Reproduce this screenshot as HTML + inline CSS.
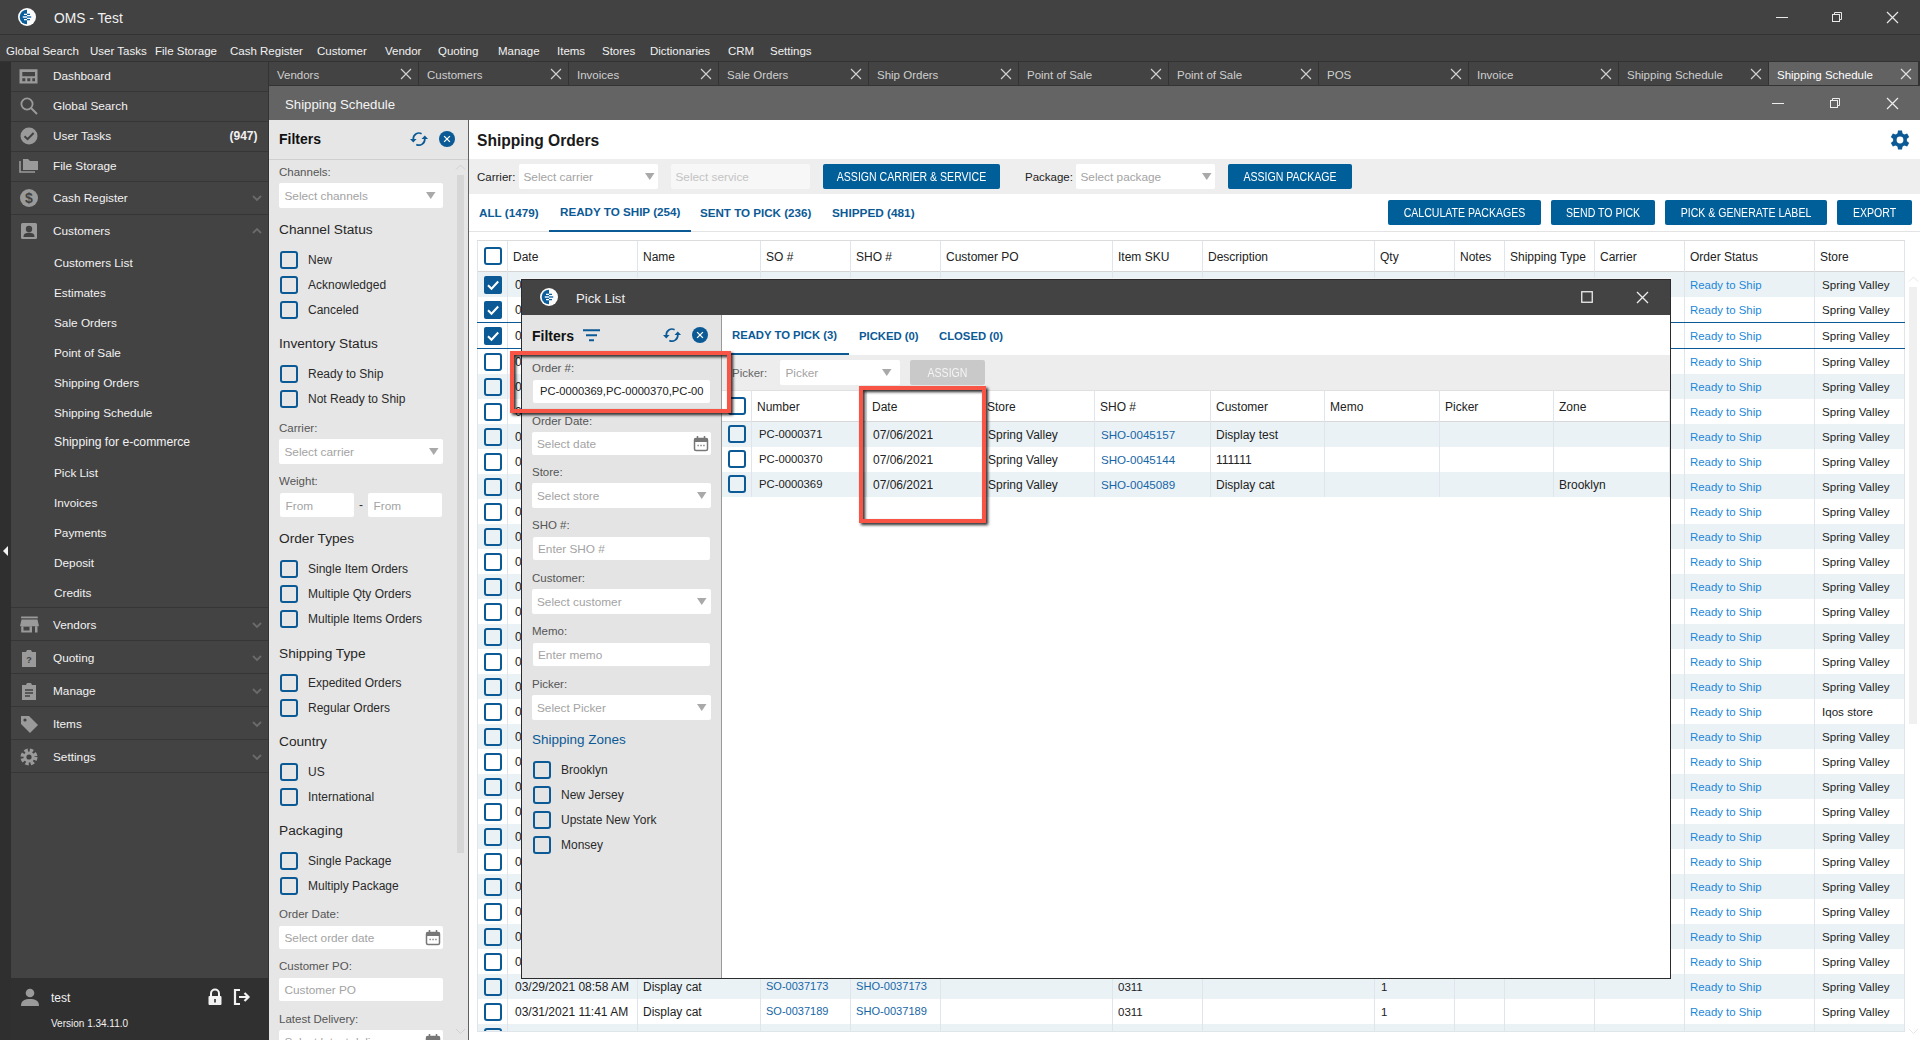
<!DOCTYPE html>
<html><head><meta charset="utf-8"><style>
html,body{margin:0;padding:0;}
body{width:1920px;height:1040px;overflow:hidden;position:relative;background:#fff;font-family:"Liberation Sans", sans-serif;}
.a{position:absolute;}
.t{position:absolute;white-space:nowrap;}
svg.a{overflow:visible;}
</style></head><body>
<div class="a" style="left:0px;top:0px;width:1920px;height:34px;background:#424242"></div><div class="a" style="left:0px;top:34px;width:1920px;height:1px;background:#333333"></div><svg class="a" style="left:16px;top:6px;" width="22" height="22" viewBox="0 0 22 22"><circle cx="11" cy="11" r="9" fill="#fbfbfb"/><path d="M11 3.7 A7.3 7.3 0 0 0 11 18.3 Z" fill="#0a5e9c"/><path d="M8 8.4H11M8 13.6H11" stroke="#ffffff" stroke-width="1.4"/><path d="M11 8.4H14M11 13.6H14" stroke="#0a5e9c" stroke-width="1.4"/><path d="M6.8 11H11" stroke="#c9dcea" stroke-width="1.8"/><path d="M11 11H15.2" stroke="#3f86bf" stroke-width="1.8"/></svg><div class="t" style="left:54px;top:8.5px;line-height:19px;font-size:13.8px;color:#f0f0f0;font-weight:normal;">OMS - Test</div><div class="a" style="left:1776px;top:17px;width:12px;height:1px;background:#e8e8e8"></div><svg class="a" style="left:1831px;top:11px;" width="12" height="12" viewBox="0 0 12 12"><rect x="1.5" y="3.5" width="7" height="7" fill="none" stroke="#e8e8e8"/><path d="M3.5 3.5V1.5H10.5V8.5H8.5" fill="none" stroke="#e8e8e8"/></svg><svg class="a" style="left:1885.5px;top:10.5px;" width="13" height="13" viewBox="0 0 13 13"><path d="M1 1L12 12M12 1L1 12" stroke="#e8e8e8" stroke-width="1.2"/></svg><div class="a" style="left:0px;top:35px;width:1920px;height:26px;background:#414141"></div><div class="t" style="left:6px;top:42.7px;line-height:16px;font-size:11.5px;color:#f2f2f2;font-weight:normal;">Global Search</div><div class="t" style="left:90px;top:42.7px;line-height:16px;font-size:11.5px;color:#f2f2f2;font-weight:normal;">User Tasks</div><div class="t" style="left:155px;top:42.7px;line-height:16px;font-size:11.5px;color:#f2f2f2;font-weight:normal;">File Storage</div><div class="t" style="left:230px;top:42.7px;line-height:16px;font-size:11.5px;color:#f2f2f2;font-weight:normal;">Cash Register</div><div class="t" style="left:317px;top:42.7px;line-height:16px;font-size:11.5px;color:#f2f2f2;font-weight:normal;">Customer</div><div class="t" style="left:385px;top:42.7px;line-height:16px;font-size:11.5px;color:#f2f2f2;font-weight:normal;">Vendor</div><div class="t" style="left:438px;top:42.7px;line-height:16px;font-size:11.5px;color:#f2f2f2;font-weight:normal;">Quoting</div><div class="t" style="left:498px;top:42.7px;line-height:16px;font-size:11.5px;color:#f2f2f2;font-weight:normal;">Manage</div><div class="t" style="left:557px;top:42.7px;line-height:16px;font-size:11.5px;color:#f2f2f2;font-weight:normal;">Items</div><div class="t" style="left:602px;top:42.7px;line-height:16px;font-size:11.5px;color:#f2f2f2;font-weight:normal;">Stores</div><div class="t" style="left:650px;top:42.7px;line-height:16px;font-size:11.5px;color:#f2f2f2;font-weight:normal;">Dictionaries</div><div class="t" style="left:728px;top:42.7px;line-height:16px;font-size:11.5px;color:#f2f2f2;font-weight:normal;">CRM</div><div class="t" style="left:770px;top:42.7px;line-height:16px;font-size:11.5px;color:#f2f2f2;font-weight:normal;">Settings</div><div class="a" style="left:0px;top:61px;width:269px;height:979px;background:#434343"></div><div class="a" style="left:0px;top:61px;width:11px;height:979px;background:#2f2f2f"></div><svg class="a" style="left:1px;top:545px;" width="8" height="12" viewBox="0 0 8 12"><path d="M7 1L2 6L7 11Z" fill="#f4f4f4"/></svg><svg class="a" style="left:19px;top:66.0px;" width="20" height="20" viewBox="0 0 20 20"><path fill="#9a9a9a" fill-rule="evenodd" d="M0.5 3.3H18.5V17.4H0.5Z M3.3 6H16V10.3H3.3Z M3.3 12.3H6.3V15.3H3.3Z M8.3 12.3H11.3V15.3H8.3Z M13.3 12.3H16V15.3H13.3Z"/></svg><div class="t" style="left:53px;top:68.0px;line-height:16px;font-size:11.8px;color:#f2f2f2;font-weight:normal;">Dashboard</div><svg class="a" style="left:19px;top:96.0px;" width="20" height="20" viewBox="0 0 20 20"><circle cx="8" cy="8" r="5.6" fill="none" stroke="#9a9a9a" stroke-width="1.8"/><path d="M12 12L18 18" stroke="#9a9a9a" stroke-width="2"/></svg><div class="t" style="left:53px;top:98.0px;line-height:16px;font-size:11.8px;color:#f2f2f2;font-weight:normal;">Global Search</div><div class="a" style="left:11px;top:91px;width:258px;height:1px;background:#363636"></div><svg class="a" style="left:19px;top:126.0px;" width="20" height="20" viewBox="0 0 20 20"><circle cx="10" cy="10" r="8.5" fill="#9a9a9a"/><path d="M5.5 10.2L8.6 13.2L14.6 7" fill="none" stroke="#414141" stroke-width="2"/></svg><div class="t" style="left:53px;top:128.0px;line-height:16px;font-size:11.8px;color:#f2f2f2;font-weight:normal;">User Tasks</div><div class="a" style="left:11px;top:121px;width:258px;height:1px;background:#363636"></div><svg class="a" style="left:19px;top:156.0px;" width="20" height="20" viewBox="0 0 20 20"><path d="M1 5V16H16" fill="none" stroke="#9a9a9a" stroke-width="1.6"/><path d="M4 3H9L11 5H19V14H4Z" fill="#9a9a9a"/></svg><div class="t" style="left:53px;top:158.0px;line-height:16px;font-size:11.8px;color:#f2f2f2;font-weight:normal;">File Storage</div><div class="a" style="left:11px;top:151px;width:258px;height:1px;background:#363636"></div><svg class="a" style="left:19px;top:187.5px;" width="20" height="20" viewBox="0 0 20 20"><circle cx="10" cy="10" r="9" fill="#9a9a9a"/><text x="10" y="15" font-size="14" font-family="Liberation Sans" font-weight="bold" text-anchor="middle" fill="#414141">$</text></svg><div class="t" style="left:53px;top:189.5px;line-height:16px;font-size:11.8px;color:#f2f2f2;font-weight:normal;">Cash Register</div><div class="a" style="left:11px;top:181px;width:258px;height:1px;background:#363636"></div><svg class="a" style="left:19px;top:220.5px;" width="20" height="20" viewBox="0 0 20 20"><rect x="2" y="2" width="16" height="16" rx="1.5" fill="#9a9a9a"/><circle cx="10" cy="8" r="3.2" fill="#414141"/><path d="M4.5 16C4.5 12.5 7 11.8 10 11.8S15.5 12.5 15.5 16Z" fill="#414141"/></svg><div class="t" style="left:53px;top:222.5px;line-height:16px;font-size:11.8px;color:#f2f2f2;font-weight:normal;">Customers</div><div class="a" style="left:11px;top:214px;width:258px;height:1px;background:#363636"></div><div class="t" style="left:229.5px;top:128.0px;line-height:16px;font-size:12px;color:#f2f2f2;font-weight:bold;">(947)</div><svg class="a" style="left:252.0px;top:195.0px;" width="10" height="6" viewBox="0 0 10 6"><path d="M1 1L5.0 5L9 1" fill="none" stroke="#6b6b6b" stroke-width="1.8"/></svg><svg class="a" style="left:252.0px;top:228.0px;" width="10" height="6" viewBox="0 0 10 6"><path d="M1 5L5.0 1L9 5" fill="none" stroke="#6b6b6b" stroke-width="1.8"/></svg><div class="t" style="left:54px;top:254.5px;line-height:16px;font-size:11.8px;color:#f2f2f2;font-weight:normal;">Customers List</div><div class="t" style="left:54px;top:284.6px;line-height:16px;font-size:11.8px;color:#f2f2f2;font-weight:normal;">Estimates</div><div class="t" style="left:54px;top:314.6px;line-height:16px;font-size:11.8px;color:#f2f2f2;font-weight:normal;">Sale Orders</div><div class="t" style="left:54px;top:344.6px;line-height:16px;font-size:11.8px;color:#f2f2f2;font-weight:normal;">Point of Sale</div><div class="t" style="left:54px;top:374.7px;line-height:16px;font-size:11.8px;color:#f2f2f2;font-weight:normal;">Shipping Orders</div><div class="t" style="left:54px;top:404.8px;line-height:16px;font-size:11.8px;color:#f2f2f2;font-weight:normal;">Shipping Schedule</div><div class="t" style="left:54px;top:434.3px;line-height:17px;font-size:12.2px;color:#f2f2f2;font-weight:normal;">Shipping for e-commerce</div><div class="t" style="left:54px;top:464.9px;line-height:16px;font-size:11.8px;color:#f2f2f2;font-weight:normal;">Pick List</div><div class="t" style="left:54px;top:494.9px;line-height:16px;font-size:11.8px;color:#f2f2f2;font-weight:normal;">Invoices</div><div class="t" style="left:54px;top:525.0px;line-height:16px;font-size:11.8px;color:#f2f2f2;font-weight:normal;">Payments</div><div class="t" style="left:54px;top:555.0px;line-height:16px;font-size:11.8px;color:#f2f2f2;font-weight:normal;">Deposit</div><div class="t" style="left:54px;top:585.0px;line-height:16px;font-size:11.8px;color:#f2f2f2;font-weight:normal;">Credits</div><div class="a" style="left:11px;top:607px;width:258px;height:1px;background:#363636"></div><svg class="a" style="left:19px;top:614.5px;" width="20" height="20" viewBox="0 0 20 20"><path fill="#9a9a9a" d="M2.1 1.5H18.8V3.3H2.1Z"/><path fill="#9a9a9a" d="M2.5 4.5H18.5L20 11.2H1Z"/><path fill="#9a9a9a" fill-rule="evenodd" d="M2.2 11.2H13V17.5H2.2Z M4.5 11.8H10.5V15.5H4.5Z"/><path fill="#9a9a9a" d="M16 11.2H18.5V17.5H16Z"/></svg><div class="t" style="left:53px;top:616.5px;line-height:16px;font-size:11.8px;color:#f2f2f2;font-weight:normal;">Vendors</div><svg class="a" style="left:252.0px;top:621.5px;" width="10" height="6" viewBox="0 0 10 6"><path d="M1 1L5.0 5L9 1" fill="none" stroke="#6b6b6b" stroke-width="1.8"/></svg><div class="a" style="left:11px;top:640px;width:258px;height:1px;background:#363636"></div><svg class="a" style="left:19px;top:647.5px;" width="20" height="20" viewBox="0 0 20 20"><path d="M3 4H7L8 2H12L13 4H17V19H3Z" fill="#9a9a9a"/><text x="10" y="15" font-size="9" font-family="Liberation Sans" font-weight="bold" text-anchor="middle" fill="#414141">?</text></svg><div class="t" style="left:53px;top:649.5px;line-height:16px;font-size:11.8px;color:#f2f2f2;font-weight:normal;">Quoting</div><svg class="a" style="left:252.0px;top:654.5px;" width="10" height="6" viewBox="0 0 10 6"><path d="M1 1L5.0 5L9 1" fill="none" stroke="#6b6b6b" stroke-width="1.8"/></svg><div class="a" style="left:11px;top:673px;width:258px;height:1px;background:#363636"></div><svg class="a" style="left:19px;top:680.5px;" width="20" height="20" viewBox="0 0 20 20"><path d="M3 4H7L8 2H12L13 4H17V19H3Z" fill="#9a9a9a"/><path d="M6 9H14M6 12H14M6 15H11" stroke="#414141" stroke-width="1.5"/></svg><div class="t" style="left:53px;top:682.5px;line-height:16px;font-size:11.8px;color:#f2f2f2;font-weight:normal;">Manage</div><svg class="a" style="left:252.0px;top:687.5px;" width="10" height="6" viewBox="0 0 10 6"><path d="M1 1L5.0 5L9 1" fill="none" stroke="#6b6b6b" stroke-width="1.8"/></svg><div class="a" style="left:11px;top:706px;width:258px;height:1px;background:#363636"></div><svg class="a" style="left:19px;top:713.5px;" width="20" height="20" viewBox="0 0 20 20"><path d="M2 2H10L19 11L11 19L2 10Z" fill="#9a9a9a"/><circle cx="6" cy="6" r="1.6" fill="#414141"/></svg><div class="t" style="left:53px;top:715.5px;line-height:16px;font-size:11.8px;color:#f2f2f2;font-weight:normal;">Items</div><svg class="a" style="left:252.0px;top:720.5px;" width="10" height="6" viewBox="0 0 10 6"><path d="M1 1L5.0 5L9 1" fill="none" stroke="#6b6b6b" stroke-width="1.8"/></svg><div class="a" style="left:11px;top:739px;width:258px;height:1px;background:#363636"></div><svg class="a" style="left:19px;top:746.5px;" width="20" height="20" viewBox="0 0 20 20"><circle cx="10" cy="10" r="6.5" fill="none" stroke="#9a9a9a" stroke-width="4" stroke-dasharray="3.2 1.9"/><circle cx="10" cy="10" r="5.5" fill="#9a9a9a"/><circle cx="10" cy="10" r="2.6" fill="#414141"/></svg><div class="t" style="left:53px;top:748.5px;line-height:16px;font-size:11.8px;color:#f2f2f2;font-weight:normal;">Settings</div><svg class="a" style="left:252.0px;top:753.5px;" width="10" height="6" viewBox="0 0 10 6"><path d="M1 1L5.0 5L9 1" fill="none" stroke="#6b6b6b" stroke-width="1.8"/></svg><div class="a" style="left:11px;top:772px;width:258px;height:1px;background:#363636"></div><div class="a" style="left:0px;top:61px;width:1920px;height:1px;background:#333333"></div><div class="a" style="left:268px;top:61px;width:1px;height:979px;background:#333333"></div><div class="a" style="left:11px;top:978px;width:258px;height:62px;background:#303030"></div><svg class="a" style="left:20px;top:987px;" width="20" height="20" viewBox="0 0 20 20"><circle cx="10" cy="6" r="4.3" fill="#9a9a9a"/><path d="M1 19C1 13.5 5 12 10 12S19 13.5 19 19Z" fill="#9a9a9a"/></svg><div class="t" style="left:51px;top:990.0px;line-height:16px;font-size:12px;color:#f2f2f2;font-weight:normal;">test</div><svg class="a" style="left:207px;top:988px;" width="16" height="18" viewBox="0 0 16 18"><path d="M4 8V5.5A4 4 0 0 1 12 5.5V8" fill="none" stroke="#f2f2f2" stroke-width="2"/><rect x="1.5" y="8" width="13" height="9" rx="1" fill="#f2f2f2"/><rect x="7.2" y="11" width="1.6" height="3.5" fill="#2e2e2e"/></svg><svg class="a" style="left:233px;top:988px;" width="18" height="18" viewBox="0 0 18 18"><path d="M7 2H2V16H7" fill="none" stroke="#f2f2f2" stroke-width="2.2"/><path d="M6 9H15M11.5 5L15.5 9L11.5 13" fill="none" stroke="#f2f2f2" stroke-width="2.2"/></svg><div class="t" style="left:51px;top:1017.0px;line-height:14px;font-size:10px;color:#f2f2f2;font-weight:normal;">Version 1.34.11.0</div><div class="a" style="left:269px;top:61px;width:1651px;height:25px;background:#333333"></div><div class="a" style="left:269px;top:62px;width:149px;height:23px;background:#434343"></div><div class="t" style="left:277px;top:66.5px;line-height:16px;font-size:11.5px;color:#cfcfcf;font-weight:normal;">Vendors</div><svg class="a" style="left:400.0px;top:68.0px;" width="12" height="12" viewBox="0 0 12 12"><path d="M1 1L11 11M11 1L1 11" stroke="#cfcfcf" stroke-width="1.2"/></svg><div class="a" style="left:419px;top:62px;width:149px;height:23px;background:#434343"></div><div class="t" style="left:427px;top:66.5px;line-height:16px;font-size:11.5px;color:#cfcfcf;font-weight:normal;">Customers</div><svg class="a" style="left:550.0px;top:68.0px;" width="12" height="12" viewBox="0 0 12 12"><path d="M1 1L11 11M11 1L1 11" stroke="#cfcfcf" stroke-width="1.2"/></svg><div class="a" style="left:569px;top:62px;width:149px;height:23px;background:#434343"></div><div class="t" style="left:577px;top:66.5px;line-height:16px;font-size:11.5px;color:#cfcfcf;font-weight:normal;">Invoices</div><svg class="a" style="left:700.0px;top:68.0px;" width="12" height="12" viewBox="0 0 12 12"><path d="M1 1L11 11M11 1L1 11" stroke="#cfcfcf" stroke-width="1.2"/></svg><div class="a" style="left:719px;top:62px;width:149px;height:23px;background:#434343"></div><div class="t" style="left:727px;top:66.5px;line-height:16px;font-size:11.5px;color:#cfcfcf;font-weight:normal;">Sale Orders</div><svg class="a" style="left:850.0px;top:68.0px;" width="12" height="12" viewBox="0 0 12 12"><path d="M1 1L11 11M11 1L1 11" stroke="#cfcfcf" stroke-width="1.2"/></svg><div class="a" style="left:869px;top:62px;width:149px;height:23px;background:#434343"></div><div class="t" style="left:877px;top:66.5px;line-height:16px;font-size:11.5px;color:#cfcfcf;font-weight:normal;">Ship Orders</div><svg class="a" style="left:1000.0px;top:68.0px;" width="12" height="12" viewBox="0 0 12 12"><path d="M1 1L11 11M11 1L1 11" stroke="#cfcfcf" stroke-width="1.2"/></svg><div class="a" style="left:1019px;top:62px;width:149px;height:23px;background:#434343"></div><div class="t" style="left:1027px;top:66.5px;line-height:16px;font-size:11.5px;color:#cfcfcf;font-weight:normal;">Point of Sale</div><svg class="a" style="left:1150.0px;top:68.0px;" width="12" height="12" viewBox="0 0 12 12"><path d="M1 1L11 11M11 1L1 11" stroke="#cfcfcf" stroke-width="1.2"/></svg><div class="a" style="left:1169px;top:62px;width:149px;height:23px;background:#434343"></div><div class="t" style="left:1177px;top:66.5px;line-height:16px;font-size:11.5px;color:#cfcfcf;font-weight:normal;">Point of Sale</div><svg class="a" style="left:1300.0px;top:68.0px;" width="12" height="12" viewBox="0 0 12 12"><path d="M1 1L11 11M11 1L1 11" stroke="#cfcfcf" stroke-width="1.2"/></svg><div class="a" style="left:1319px;top:62px;width:149px;height:23px;background:#434343"></div><div class="t" style="left:1327px;top:66.5px;line-height:16px;font-size:11.5px;color:#cfcfcf;font-weight:normal;">POS</div><svg class="a" style="left:1450.0px;top:68.0px;" width="12" height="12" viewBox="0 0 12 12"><path d="M1 1L11 11M11 1L1 11" stroke="#cfcfcf" stroke-width="1.2"/></svg><div class="a" style="left:1469px;top:62px;width:149px;height:23px;background:#434343"></div><div class="t" style="left:1477px;top:66.5px;line-height:16px;font-size:11.5px;color:#cfcfcf;font-weight:normal;">Invoice</div><svg class="a" style="left:1600.0px;top:68.0px;" width="12" height="12" viewBox="0 0 12 12"><path d="M1 1L11 11M11 1L1 11" stroke="#cfcfcf" stroke-width="1.2"/></svg><div class="a" style="left:1619px;top:62px;width:149px;height:23px;background:#434343"></div><div class="t" style="left:1627px;top:66.5px;line-height:16px;font-size:11.5px;color:#cfcfcf;font-weight:normal;">Shipping Schedule</div><svg class="a" style="left:1750.0px;top:68.0px;" width="12" height="12" viewBox="0 0 12 12"><path d="M1 1L11 11M11 1L1 11" stroke="#cfcfcf" stroke-width="1.2"/></svg><div class="a" style="left:1769px;top:62px;width:149px;height:23px;background:#626262"></div><div class="t" style="left:1777px;top:66.5px;line-height:16px;font-size:11.5px;color:#ffffff;font-weight:normal;">Shipping Schedule</div><svg class="a" style="left:1900.0px;top:68.0px;" width="12" height="12" viewBox="0 0 12 12"><path d="M1 1L11 11M11 1L1 11" stroke="#e0e0e0" stroke-width="1.2"/></svg><div class="a" style="left:269px;top:86px;width:1651px;height:34px;background:#646464"></div><div class="t" style="left:285px;top:95.5px;line-height:18px;font-size:13.2px;color:#f4f4f4;font-weight:normal;">Shipping Schedule</div><div class="a" style="left:1772px;top:103px;width:12px;height:1px;background:#eeeeee"></div><svg class="a" style="left:1829px;top:97px;" width="12" height="12" viewBox="0 0 12 12"><rect x="1.5" y="3.5" width="7" height="7" fill="none" stroke="#eeeeee"/><path d="M3.5 3.5V1.5H10.5V8.5H8.5" fill="none" stroke="#eeeeee"/></svg><svg class="a" style="left:1885.5px;top:96.5px;" width="13" height="13" viewBox="0 0 13 13"><path d="M1 1L12 12M12 1L1 12" stroke="#eeeeee" stroke-width="1.2"/></svg><div class="a" style="left:269px;top:120px;width:200px;height:920px;background:#e6e6e6"></div><div class="a" style="left:468px;top:120px;width:1px;height:920px;background:#606060"></div><div class="t" style="left:279px;top:130.3px;line-height:19px;font-size:14px;color:#111;font-weight:bold;">Filters</div><svg class="a" style="left:409px;top:131px;" width="20" height="16" viewBox="0 0 20 16"><path d="M12.6 2.7A5.7 5.7 0 0 0 4.3 8.2" fill="none" stroke="#0b5a96" stroke-width="1.7"/><path d="M1 8.1H7.6L4.3 11.4Z" fill="#0b5a96"/><path d="M7.3 13.4A5.8 5.8 0 0 0 15.8 7.8" fill="none" stroke="#0b5a96" stroke-width="1.7"/><path d="M12.5 7.9H19.1L15.8 4.6Z" fill="#0b5a96"/></svg><svg class="a" style="left:439px;top:131px;" width="16" height="16" viewBox="0 0 16 16"><circle cx="8" cy="8" r="8" fill="#0b5a96"/><path d="M5.1 5.1L10.9 10.9M10.9 5.1L5.1 10.9" stroke="#fff" stroke-width="1.3"/></svg><div class="a" style="left:269px;top:159px;width:199px;height:1px;background:#cfcfcf"></div><div class="a" style="left:457px;top:175px;width:7px;height:678px;background:#d6d6d6"></div><svg class="a" style="left:454.5px;top:163.75px;" width="11" height="6.5" viewBox="0 0 11 6.5"><path d="M1 5.5L5.5 1L10 5.5" fill="none" stroke="#d0d0d0" stroke-width="1"/></svg><div class="t" style="left:279px;top:164.0px;line-height:16px;font-size:11.5px;color:#555;font-weight:normal;">Channels:</div><div class="a" style="left:279px;top:183px;width:164px;height:25px;background:#fff;border-radius:2px"></div><div class="t" style="left:284.5px;top:188.0px;line-height:16px;font-size:11.8px;color:#a3a3a3;font-weight:normal;">Select channels</div><svg class="a" style="left:425.55px;top:192.0px;" width="9.5" height="7" viewBox="0 0 9.5 7"><path d="M0 0H9.5L4.75 7Z" fill="#a9a9a9"/></svg><div class="t" style="left:279px;top:220.3px;line-height:19px;font-size:13.7px;color:#262626;font-weight:normal;">Channel Status</div><svg class="a" style="left:280px;top:251px;" width="18" height="18" viewBox="0 0 18 18"><rect x="1" y="1" width="16" height="16" rx="2" fill="none" stroke="#0b5a96" stroke-width="2"/></svg><div class="t" style="left:308px;top:252.0px;line-height:16px;font-size:12px;color:#2a2a2a;font-weight:normal;">New</div><svg class="a" style="left:280px;top:276px;" width="18" height="18" viewBox="0 0 18 18"><rect x="1" y="1" width="16" height="16" rx="2" fill="none" stroke="#0b5a96" stroke-width="2"/></svg><div class="t" style="left:308px;top:277.0px;line-height:16px;font-size:12px;color:#2a2a2a;font-weight:normal;">Acknowledged</div><svg class="a" style="left:280px;top:301px;" width="18" height="18" viewBox="0 0 18 18"><rect x="1" y="1" width="16" height="16" rx="2" fill="none" stroke="#0b5a96" stroke-width="2"/></svg><div class="t" style="left:308px;top:302.0px;line-height:16px;font-size:12px;color:#2a2a2a;font-weight:normal;">Canceled</div><div class="t" style="left:279px;top:334.3px;line-height:19px;font-size:13.7px;color:#262626;font-weight:normal;">Inventory Status</div><svg class="a" style="left:280px;top:365px;" width="18" height="18" viewBox="0 0 18 18"><rect x="1" y="1" width="16" height="16" rx="2" fill="none" stroke="#0b5a96" stroke-width="2"/></svg><div class="t" style="left:308px;top:366.0px;line-height:16px;font-size:12px;color:#2a2a2a;font-weight:normal;">Ready to Ship</div><svg class="a" style="left:280px;top:390px;" width="18" height="18" viewBox="0 0 18 18"><rect x="1" y="1" width="16" height="16" rx="2" fill="none" stroke="#0b5a96" stroke-width="2"/></svg><div class="t" style="left:308px;top:391.0px;line-height:16px;font-size:12px;color:#2a2a2a;font-weight:normal;">Not Ready to Ship</div><div class="t" style="left:279px;top:420.0px;line-height:16px;font-size:11.5px;color:#555;font-weight:normal;">Carrier:</div><div class="a" style="left:279px;top:439px;width:164px;height:25px;background:#fff;border-radius:2px"></div><div class="t" style="left:284.5px;top:444.0px;line-height:16px;font-size:11.8px;color:#a3a3a3;font-weight:normal;">Select carrier</div><svg class="a" style="left:429.05px;top:448.0px;" width="9.5" height="7" viewBox="0 0 9.5 7"><path d="M0 0H9.5L4.75 7Z" fill="#a9a9a9"/></svg><div class="t" style="left:279px;top:473.0px;line-height:16px;font-size:11.5px;color:#555;font-weight:normal;">Weight:</div><div class="a" style="left:280px;top:493px;width:74px;height:24px;background:#fff;border-radius:2px"></div><div class="t" style="left:285.5px;top:497.5px;line-height:16px;font-size:11.8px;color:#a3a3a3;font-weight:normal;">From</div><div class="t" style="left:359px;top:497.0px;line-height:16px;font-size:12px;color:#333;font-weight:normal;">-</div><div class="a" style="left:368px;top:493px;width:74px;height:24px;background:#fff;border-radius:2px"></div><div class="t" style="left:373.5px;top:497.5px;line-height:16px;font-size:11.8px;color:#a3a3a3;font-weight:normal;">From</div><div class="t" style="left:279px;top:529.3px;line-height:19px;font-size:13.7px;color:#262626;font-weight:normal;">Order Types</div><svg class="a" style="left:280px;top:560px;" width="18" height="18" viewBox="0 0 18 18"><rect x="1" y="1" width="16" height="16" rx="2" fill="none" stroke="#0b5a96" stroke-width="2"/></svg><div class="t" style="left:308px;top:561.0px;line-height:16px;font-size:12px;color:#2a2a2a;font-weight:normal;">Single Item Orders</div><svg class="a" style="left:280px;top:585px;" width="18" height="18" viewBox="0 0 18 18"><rect x="1" y="1" width="16" height="16" rx="2" fill="none" stroke="#0b5a96" stroke-width="2"/></svg><div class="t" style="left:308px;top:586.0px;line-height:16px;font-size:12px;color:#2a2a2a;font-weight:normal;">Multiple Qty Orders</div><svg class="a" style="left:280px;top:610px;" width="18" height="18" viewBox="0 0 18 18"><rect x="1" y="1" width="16" height="16" rx="2" fill="none" stroke="#0b5a96" stroke-width="2"/></svg><div class="t" style="left:308px;top:611.0px;line-height:16px;font-size:12px;color:#2a2a2a;font-weight:normal;">Multiple Items Orders</div><div class="t" style="left:279px;top:644.3px;line-height:19px;font-size:13.7px;color:#262626;font-weight:normal;">Shipping Type</div><svg class="a" style="left:280px;top:674px;" width="18" height="18" viewBox="0 0 18 18"><rect x="1" y="1" width="16" height="16" rx="2" fill="none" stroke="#0b5a96" stroke-width="2"/></svg><div class="t" style="left:308px;top:675.0px;line-height:16px;font-size:12px;color:#2a2a2a;font-weight:normal;">Expedited Orders</div><svg class="a" style="left:280px;top:699px;" width="18" height="18" viewBox="0 0 18 18"><rect x="1" y="1" width="16" height="16" rx="2" fill="none" stroke="#0b5a96" stroke-width="2"/></svg><div class="t" style="left:308px;top:700.0px;line-height:16px;font-size:12px;color:#2a2a2a;font-weight:normal;">Regular Orders</div><div class="t" style="left:279px;top:732.3px;line-height:19px;font-size:13.7px;color:#262626;font-weight:normal;">Country</div><svg class="a" style="left:280px;top:763px;" width="18" height="18" viewBox="0 0 18 18"><rect x="1" y="1" width="16" height="16" rx="2" fill="none" stroke="#0b5a96" stroke-width="2"/></svg><div class="t" style="left:308px;top:764.0px;line-height:16px;font-size:12px;color:#2a2a2a;font-weight:normal;">US</div><svg class="a" style="left:280px;top:788px;" width="18" height="18" viewBox="0 0 18 18"><rect x="1" y="1" width="16" height="16" rx="2" fill="none" stroke="#0b5a96" stroke-width="2"/></svg><div class="t" style="left:308px;top:789.0px;line-height:16px;font-size:12px;color:#2a2a2a;font-weight:normal;">International</div><div class="t" style="left:279px;top:821.3px;line-height:19px;font-size:13.7px;color:#262626;font-weight:normal;">Packaging</div><svg class="a" style="left:280px;top:852px;" width="18" height="18" viewBox="0 0 18 18"><rect x="1" y="1" width="16" height="16" rx="2" fill="none" stroke="#0b5a96" stroke-width="2"/></svg><div class="t" style="left:308px;top:853.0px;line-height:16px;font-size:12px;color:#2a2a2a;font-weight:normal;">Single Package</div><svg class="a" style="left:280px;top:877px;" width="18" height="18" viewBox="0 0 18 18"><rect x="1" y="1" width="16" height="16" rx="2" fill="none" stroke="#0b5a96" stroke-width="2"/></svg><div class="t" style="left:308px;top:878.0px;line-height:16px;font-size:12px;color:#2a2a2a;font-weight:normal;">Multiply Package</div><div class="t" style="left:279px;top:906.0px;line-height:16px;font-size:11.5px;color:#555;font-weight:normal;">Order Date:</div><div class="a" style="left:279px;top:926px;width:164px;height:23px;background:#fff;border-radius:2px"></div><div class="t" style="left:284.5px;top:930.0px;line-height:16px;font-size:11.8px;color:#a3a3a3;font-weight:normal;">Select order date</div><svg class="a" style="left:425px;top:928.5px;" width="16" height="17" viewBox="0 0 16 17"><rect x="1.5" y="3.5" width="13" height="12" rx="1.5" fill="none" stroke="#777" stroke-width="1.5"/><path d="M1.5 3.5H14.5V7H1.5Z" fill="#777"/><path d="M4.5 1V4M11.5 1V4" stroke="#777" stroke-width="1.5"/><path d="M4.5 10.5h1.3M7.4 10.5h1.3M10.3 10.5h1.3" stroke="#777" stroke-width="1.3"/></svg><div class="t" style="left:279px;top:958.0px;line-height:16px;font-size:11.5px;color:#555;font-weight:normal;">Customer PO:</div><div class="a" style="left:279px;top:978px;width:164px;height:23px;background:#fff;border-radius:2px"></div><div class="t" style="left:284.5px;top:982.0px;line-height:16px;font-size:11.8px;color:#a3a3a3;font-weight:normal;">Customer PO</div><div class="t" style="left:279px;top:1011.0px;line-height:16px;font-size:11.5px;color:#555;font-weight:normal;">Latest Delivery:</div><div class="a" style="left:279px;top:1030px;width:164px;height:23px;background:#fff;border-radius:2px"></div><div class="t" style="left:284.5px;top:1034.0px;line-height:16px;font-size:11.8px;color:#a3a3a3;font-weight:normal;">Select latest delivery</div><svg class="a" style="left:425px;top:1032.5px;" width="16" height="17" viewBox="0 0 16 17"><rect x="1.5" y="3.5" width="13" height="12" rx="1.5" fill="none" stroke="#777" stroke-width="1.5"/><path d="M1.5 3.5H14.5V7H1.5Z" fill="#777"/><path d="M4.5 1V4M11.5 1V4" stroke="#777" stroke-width="1.5"/><path d="M4.5 10.5h1.3M7.4 10.5h1.3M10.3 10.5h1.3" stroke="#777" stroke-width="1.3"/></svg><svg class="a" style="left:454.5px;top:1027.75px;" width="11" height="6.5" viewBox="0 0 11 6.5"><path d="M1 1L5.5 5.5L10 1" fill="none" stroke="#d0d0d0" stroke-width="1"/></svg><div class="a" style="left:469px;top:120px;width:1451px;height:920px;background:#ffffff"></div><div class="t" style="left:477px;top:129.5px;line-height:21px;font-size:15.6px;color:#1a1a1a;font-weight:bold;">Shipping Orders</div><svg class="a" style="left:1890px;top:129.5px;" width="20" height="20" viewBox="0 0 20 20"><g fill="#0b5a96"><circle cx="10" cy="10" r="7"/><path d="M8 0.6H12L12.6 4H7.4Z" transform="rotate(0 10 10)"/><path d="M8 0.6H12L12.6 4H7.4Z" transform="rotate(60 10 10)"/><path d="M8 0.6H12L12.6 4H7.4Z" transform="rotate(120 10 10)"/><path d="M8 0.6H12L12.6 4H7.4Z" transform="rotate(180 10 10)"/><path d="M8 0.6H12L12.6 4H7.4Z" transform="rotate(240 10 10)"/><path d="M8 0.6H12L12.6 4H7.4Z" transform="rotate(300 10 10)"/></g><circle cx="10" cy="10" r="3.4" fill="#fff"/></svg><div class="a" style="left:469px;top:159px;width:1451px;height:35px;background:#eeeeee"></div><div class="t" style="left:477px;top:168.8px;line-height:16px;font-size:11.5px;color:#222;font-weight:normal;">Carrier:</div><div class="a" style="left:519px;top:164px;width:139px;height:25px;background:#fff;border-radius:2px"></div><div class="t" style="left:523.5px;top:169.0px;line-height:16px;font-size:11.8px;color:#a3a3a3;font-weight:normal;">Select carrier</div><svg class="a" style="left:645.25px;top:173.0px;" width="9.5" height="7" viewBox="0 0 9.5 7"><path d="M0 0H9.5L4.75 7Z" fill="#a9a9a9"/></svg><div class="a" style="left:671px;top:164px;width:139px;height:25px;background:#f7f7f7;border-radius:2px"></div><div class="t" style="left:675.5px;top:169.0px;line-height:16px;font-size:11.8px;color:#c4c4c4;font-weight:normal;">Select service</div><div class="a" style="left:823px;top:164px;width:177px;height:25px;background:#005e99;border-radius:2px"></div><div class="t" style="left:823px;top:164.7px;width:177px;line-height:25px;text-align:center;font-size:12px;color:#fff;transform:scaleX(0.88)">ASSIGN CARRIER &amp; SERVICE</div><div class="t" style="left:1025px;top:168.8px;line-height:16px;font-size:11.5px;color:#222;font-weight:normal;">Package:</div><div class="a" style="left:1076px;top:164px;width:139px;height:25px;background:#fff;border-radius:2px"></div><div class="t" style="left:1080.5px;top:169.0px;line-height:16px;font-size:11.8px;color:#a3a3a3;font-weight:normal;">Select package</div><svg class="a" style="left:1202.25px;top:173.0px;" width="9.5" height="7" viewBox="0 0 9.5 7"><path d="M0 0H9.5L4.75 7Z" fill="#a9a9a9"/></svg><div class="a" style="left:1228px;top:164px;width:124px;height:25px;background:#005e99;border-radius:2px"></div><div class="t" style="left:1228px;top:164.7px;width:124px;line-height:25px;text-align:center;font-size:12px;color:#fff;transform:scaleX(0.88)">ASSIGN PACKAGE</div><div class="t" style="left:479px;top:204.6px;line-height:16px;font-size:11.7px;color:#0b5a96;font-weight:bold;">ALL (1479)</div><div class="t" style="left:560px;top:203.6px;line-height:16px;font-size:11.65px;color:#0b5a96;font-weight:bold;">READY TO SHIP (254)</div><div class="t" style="left:700px;top:204.6px;line-height:16px;font-size:11.6px;color:#0b5a96;font-weight:bold;">SENT TO PICK (236)</div><div class="t" style="left:832px;top:204.6px;line-height:16px;font-size:11.8px;color:#0b5a96;font-weight:bold;">SHIPPED (481)</div><div class="a" style="left:469px;top:231px;width:1451px;height:1px;background:#e3e3e3"></div><div class="a" style="left:549px;top:230px;width:142px;height:2px;background:#0b5a96"></div><div class="a" style="left:1388px;top:200px;width:153px;height:25px;background:#005e99;border-radius:2px"></div><div class="t" style="left:1388px;top:200.7px;width:153px;line-height:25px;text-align:center;font-size:12px;color:#fff;transform:scaleX(0.88)">CALCULATE PACKAGES</div><div class="a" style="left:1551px;top:200px;width:104px;height:25px;background:#005e99;border-radius:2px"></div><div class="t" style="left:1551px;top:200.7px;width:104px;line-height:25px;text-align:center;font-size:12px;color:#fff;transform:scaleX(0.88)">SEND TO PICK</div><div class="a" style="left:1665px;top:200px;width:162px;height:25px;background:#005e99;border-radius:2px"></div><div class="t" style="left:1665px;top:200.7px;width:162px;line-height:25px;text-align:center;font-size:12px;color:#fff;transform:scaleX(0.88)">PICK &amp; GENERATE LABEL</div><div class="a" style="left:1837px;top:200px;width:75px;height:25px;background:#005e99;border-radius:2px"></div><div class="t" style="left:1837px;top:200.7px;width:75px;line-height:25px;text-align:center;font-size:12px;color:#fff;transform:scaleX(0.88)">EXPORT</div><div class="a" style="left:477px;top:240px;width:1428px;height:32px;background:#fff;border-top:1px solid #dcdcdc"></div><div class="a" style="left:477px;top:271px;width:1428px;height:1px;background:#d5d5d5"></div><div class="a" style="left:477px;top:272px;width:1428px;height:25px;background:#ebf2f6"></div><div class="a" style="left:477px;top:297px;width:1428px;height:25px;background:#fff"></div><div class="a" style="left:477px;top:322px;width:1428px;height:27px;background:#fff"></div><div class="a" style="left:477px;top:349px;width:1428px;height:25px;background:#fff"></div><div class="a" style="left:477px;top:374px;width:1428px;height:25px;background:#ebf2f6"></div><div class="a" style="left:477px;top:399px;width:1428px;height:25px;background:#fff"></div><div class="a" style="left:477px;top:424px;width:1428px;height:25px;background:#ebf2f6"></div><div class="a" style="left:477px;top:449px;width:1428px;height:25px;background:#fff"></div><div class="a" style="left:477px;top:474px;width:1428px;height:25px;background:#ebf2f6"></div><div class="a" style="left:477px;top:499px;width:1428px;height:25px;background:#fff"></div><div class="a" style="left:477px;top:524px;width:1428px;height:25px;background:#ebf2f6"></div><div class="a" style="left:477px;top:549px;width:1428px;height:25px;background:#fff"></div><div class="a" style="left:477px;top:574px;width:1428px;height:25px;background:#ebf2f6"></div><div class="a" style="left:477px;top:599px;width:1428px;height:25px;background:#fff"></div><div class="a" style="left:477px;top:624px;width:1428px;height:25px;background:#ebf2f6"></div><div class="a" style="left:477px;top:649px;width:1428px;height:25px;background:#fff"></div><div class="a" style="left:477px;top:674px;width:1428px;height:25px;background:#ebf2f6"></div><div class="a" style="left:477px;top:699px;width:1428px;height:25px;background:#fff"></div><div class="a" style="left:477px;top:724px;width:1428px;height:25px;background:#ebf2f6"></div><div class="a" style="left:477px;top:749px;width:1428px;height:25px;background:#fff"></div><div class="a" style="left:477px;top:774px;width:1428px;height:25px;background:#ebf2f6"></div><div class="a" style="left:477px;top:799px;width:1428px;height:25px;background:#fff"></div><div class="a" style="left:477px;top:824px;width:1428px;height:25px;background:#ebf2f6"></div><div class="a" style="left:477px;top:849px;width:1428px;height:25px;background:#fff"></div><div class="a" style="left:477px;top:874px;width:1428px;height:25px;background:#ebf2f6"></div><div class="a" style="left:477px;top:899px;width:1428px;height:25px;background:#fff"></div><div class="a" style="left:477px;top:924px;width:1428px;height:25px;background:#ebf2f6"></div><div class="a" style="left:477px;top:949px;width:1428px;height:25px;background:#fff"></div><div class="a" style="left:477px;top:974px;width:1428px;height:25px;background:#ebf2f6"></div><div class="a" style="left:477px;top:999px;width:1428px;height:25px;background:#fff"></div><div class="a" style="left:477px;top:1024px;width:1428px;height:7px;background:#ebf2f6"></div><div class="a" style="left:507px;top:241px;width:1px;height:790px;background:#dfe5ea"></div><div class="a" style="left:637px;top:241px;width:1px;height:790px;background:#dfe5ea"></div><div class="a" style="left:760px;top:241px;width:1px;height:790px;background:#dfe5ea"></div><div class="a" style="left:850px;top:241px;width:1px;height:790px;background:#dfe5ea"></div><div class="a" style="left:940px;top:241px;width:1px;height:790px;background:#dfe5ea"></div><div class="a" style="left:1112px;top:241px;width:1px;height:790px;background:#dfe5ea"></div><div class="a" style="left:1202px;top:241px;width:1px;height:790px;background:#dfe5ea"></div><div class="a" style="left:1374px;top:241px;width:1px;height:790px;background:#dfe5ea"></div><div class="a" style="left:1454px;top:241px;width:1px;height:790px;background:#dfe5ea"></div><div class="a" style="left:1504px;top:241px;width:1px;height:790px;background:#dfe5ea"></div><div class="a" style="left:1594px;top:241px;width:1px;height:790px;background:#dfe5ea"></div><div class="a" style="left:1684px;top:241px;width:1px;height:790px;background:#dfe5ea"></div><div class="a" style="left:1814px;top:241px;width:1px;height:790px;background:#dfe5ea"></div><div class="a" style="left:477px;top:241px;width:1px;height:790px;background:#dfe5ea"></div><div class="a" style="left:1904px;top:241px;width:1px;height:790px;background:#dfe5ea"></div><div class="a" style="left:477px;top:1031px;width:1428px;height:1px;background:#dfe5ea"></div><div class="a" style="left:477px;top:322px;width:1428px;height:1px;background:#0b5a96"></div><div class="a" style="left:477px;top:348px;width:1428px;height:1px;background:#0b5a96"></div><svg class="a" style="left:484px;top:247px;" width="18" height="18" viewBox="0 0 18 18"><rect x="1" y="1" width="16" height="16" rx="2" fill="none" stroke="#0b5a96" stroke-width="2"/></svg><div class="t" style="left:513px;top:249.2px;line-height:16px;font-size:12px;color:#222;font-weight:normal;">Date</div><div class="t" style="left:643px;top:249.2px;line-height:16px;font-size:12px;color:#222;font-weight:normal;">Name</div><div class="t" style="left:766px;top:249.2px;line-height:16px;font-size:12px;color:#222;font-weight:normal;">SO #</div><div class="t" style="left:856px;top:249.2px;line-height:16px;font-size:12px;color:#222;font-weight:normal;">SHO #</div><div class="t" style="left:946px;top:249.2px;line-height:16px;font-size:12px;color:#222;font-weight:normal;">Customer PO</div><div class="t" style="left:1118px;top:249.2px;line-height:16px;font-size:12px;color:#222;font-weight:normal;">Item SKU</div><div class="t" style="left:1208px;top:249.2px;line-height:16px;font-size:12px;color:#222;font-weight:normal;">Description</div><div class="t" style="left:1380px;top:249.2px;line-height:16px;font-size:12px;color:#222;font-weight:normal;">Qty</div><div class="t" style="left:1460px;top:249.2px;line-height:16px;font-size:12px;color:#222;font-weight:normal;">Notes</div><div class="t" style="left:1510px;top:249.2px;line-height:16px;font-size:12px;color:#222;font-weight:normal;">Shipping Type</div><div class="t" style="left:1600px;top:249.2px;line-height:16px;font-size:12px;color:#222;font-weight:normal;">Carrier</div><div class="t" style="left:1690px;top:249.2px;line-height:16px;font-size:12px;color:#222;font-weight:normal;">Order Status</div><div class="t" style="left:1820px;top:249.2px;line-height:16px;font-size:12px;color:#222;font-weight:normal;">Store</div><svg class="a" style="left:484px;top:276px;" width="18" height="18" viewBox="0 0 18 18"><rect x="0" y="0" width="18" height="18" rx="2" fill="#0b5a96"/><path d="M4 9.3L7.5 12.8L14.2 5.5" fill="none" stroke="#fff" stroke-width="2"/></svg><div class="t" style="left:515px;top:276.8px;line-height:16px;font-size:12px;color:#222;font-weight:normal;">03/29/2021 08:58 AM</div><div class="t" style="left:643px;top:276.8px;line-height:16px;font-size:12px;color:#222;font-weight:normal;">Display cat</div><div class="t" style="left:766px;top:277.3px;line-height:15px;font-size:11px;color:#1666a6;font-weight:normal;">SO-0037173</div><div class="t" style="left:856px;top:277.3px;line-height:15px;font-size:11.1px;color:#1666a6;font-weight:normal;">SHO-0037173</div><div class="t" style="left:1118px;top:276.8px;line-height:16px;font-size:11.5px;color:#222;font-weight:normal;">0311</div><div class="t" style="left:1381px;top:276.8px;line-height:16px;font-size:11.5px;color:#222;font-weight:normal;">1</div><div class="t" style="left:1690px;top:277.9px;line-height:15px;font-size:11.4px;color:#1b87d8;font-weight:normal;">Ready to Ship</div><div class="t" style="left:1822px;top:276.8px;line-height:16px;font-size:11.6px;color:#222;font-weight:normal;">Spring Valley</div><svg class="a" style="left:484px;top:301px;" width="18" height="18" viewBox="0 0 18 18"><rect x="0" y="0" width="18" height="18" rx="2" fill="#0b5a96"/><path d="M4 9.3L7.5 12.8L14.2 5.5" fill="none" stroke="#fff" stroke-width="2"/></svg><div class="t" style="left:515px;top:301.8px;line-height:16px;font-size:12px;color:#222;font-weight:normal;">03/29/2021 08:58 AM</div><div class="t" style="left:643px;top:301.8px;line-height:16px;font-size:12px;color:#222;font-weight:normal;">Display cat</div><div class="t" style="left:766px;top:302.3px;line-height:15px;font-size:11px;color:#1666a6;font-weight:normal;">SO-0037173</div><div class="t" style="left:856px;top:302.3px;line-height:15px;font-size:11.1px;color:#1666a6;font-weight:normal;">SHO-0037173</div><div class="t" style="left:1118px;top:301.8px;line-height:16px;font-size:11.5px;color:#222;font-weight:normal;">0311</div><div class="t" style="left:1381px;top:301.8px;line-height:16px;font-size:11.5px;color:#222;font-weight:normal;">1</div><div class="t" style="left:1690px;top:302.9px;line-height:15px;font-size:11.4px;color:#1b87d8;font-weight:normal;">Ready to Ship</div><div class="t" style="left:1822px;top:301.8px;line-height:16px;font-size:11.6px;color:#222;font-weight:normal;">Spring Valley</div><svg class="a" style="left:484px;top:327px;" width="18" height="18" viewBox="0 0 18 18"><rect x="0" y="0" width="18" height="18" rx="2" fill="#0b5a96"/><path d="M4 9.3L7.5 12.8L14.2 5.5" fill="none" stroke="#fff" stroke-width="2"/></svg><div class="t" style="left:515px;top:327.8px;line-height:16px;font-size:12px;color:#222;font-weight:normal;">03/29/2021 08:58 AM</div><div class="t" style="left:643px;top:327.8px;line-height:16px;font-size:12px;color:#222;font-weight:normal;">Display cat</div><div class="t" style="left:766px;top:328.3px;line-height:15px;font-size:11px;color:#1666a6;font-weight:normal;">SO-0037173</div><div class="t" style="left:856px;top:328.3px;line-height:15px;font-size:11.1px;color:#1666a6;font-weight:normal;">SHO-0037173</div><div class="t" style="left:1118px;top:327.8px;line-height:16px;font-size:11.5px;color:#222;font-weight:normal;">0311</div><div class="t" style="left:1381px;top:327.8px;line-height:16px;font-size:11.5px;color:#222;font-weight:normal;">1</div><div class="t" style="left:1690px;top:328.9px;line-height:15px;font-size:11.4px;color:#1b87d8;font-weight:normal;">Ready to Ship</div><div class="t" style="left:1822px;top:327.8px;line-height:16px;font-size:11.6px;color:#222;font-weight:normal;">Spring Valley</div><svg class="a" style="left:484px;top:353px;" width="18" height="18" viewBox="0 0 18 18"><rect x="1" y="1" width="16" height="16" rx="2" fill="none" stroke="#0b5a96" stroke-width="2"/></svg><div class="t" style="left:515px;top:353.8px;line-height:16px;font-size:12px;color:#222;font-weight:normal;">03/29/2021 08:58 AM</div><div class="t" style="left:643px;top:353.8px;line-height:16px;font-size:12px;color:#222;font-weight:normal;">Display cat</div><div class="t" style="left:766px;top:354.3px;line-height:15px;font-size:11px;color:#1666a6;font-weight:normal;">SO-0037173</div><div class="t" style="left:856px;top:354.3px;line-height:15px;font-size:11.1px;color:#1666a6;font-weight:normal;">SHO-0037173</div><div class="t" style="left:1118px;top:353.8px;line-height:16px;font-size:11.5px;color:#222;font-weight:normal;">0311</div><div class="t" style="left:1381px;top:353.8px;line-height:16px;font-size:11.5px;color:#222;font-weight:normal;">1</div><div class="t" style="left:1690px;top:354.9px;line-height:15px;font-size:11.4px;color:#1b87d8;font-weight:normal;">Ready to Ship</div><div class="t" style="left:1822px;top:353.8px;line-height:16px;font-size:11.6px;color:#222;font-weight:normal;">Spring Valley</div><svg class="a" style="left:484px;top:378px;" width="18" height="18" viewBox="0 0 18 18"><rect x="1" y="1" width="16" height="16" rx="2" fill="none" stroke="#0b5a96" stroke-width="2"/></svg><div class="t" style="left:515px;top:378.8px;line-height:16px;font-size:12px;color:#222;font-weight:normal;">03/29/2021 08:58 AM</div><div class="t" style="left:643px;top:378.8px;line-height:16px;font-size:12px;color:#222;font-weight:normal;">Display cat</div><div class="t" style="left:766px;top:379.3px;line-height:15px;font-size:11px;color:#1666a6;font-weight:normal;">SO-0037173</div><div class="t" style="left:856px;top:379.3px;line-height:15px;font-size:11.1px;color:#1666a6;font-weight:normal;">SHO-0037173</div><div class="t" style="left:1118px;top:378.8px;line-height:16px;font-size:11.5px;color:#222;font-weight:normal;">0311</div><div class="t" style="left:1381px;top:378.8px;line-height:16px;font-size:11.5px;color:#222;font-weight:normal;">1</div><div class="t" style="left:1690px;top:379.9px;line-height:15px;font-size:11.4px;color:#1b87d8;font-weight:normal;">Ready to Ship</div><div class="t" style="left:1822px;top:378.8px;line-height:16px;font-size:11.6px;color:#222;font-weight:normal;">Spring Valley</div><svg class="a" style="left:484px;top:403px;" width="18" height="18" viewBox="0 0 18 18"><rect x="1" y="1" width="16" height="16" rx="2" fill="none" stroke="#0b5a96" stroke-width="2"/></svg><div class="t" style="left:515px;top:403.8px;line-height:16px;font-size:12px;color:#222;font-weight:normal;">03/29/2021 08:58 AM</div><div class="t" style="left:643px;top:403.8px;line-height:16px;font-size:12px;color:#222;font-weight:normal;">Display cat</div><div class="t" style="left:766px;top:404.3px;line-height:15px;font-size:11px;color:#1666a6;font-weight:normal;">SO-0037173</div><div class="t" style="left:856px;top:404.3px;line-height:15px;font-size:11.1px;color:#1666a6;font-weight:normal;">SHO-0037173</div><div class="t" style="left:1118px;top:403.8px;line-height:16px;font-size:11.5px;color:#222;font-weight:normal;">0311</div><div class="t" style="left:1381px;top:403.8px;line-height:16px;font-size:11.5px;color:#222;font-weight:normal;">1</div><div class="t" style="left:1690px;top:404.9px;line-height:15px;font-size:11.4px;color:#1b87d8;font-weight:normal;">Ready to Ship</div><div class="t" style="left:1822px;top:403.8px;line-height:16px;font-size:11.6px;color:#222;font-weight:normal;">Spring Valley</div><svg class="a" style="left:484px;top:428px;" width="18" height="18" viewBox="0 0 18 18"><rect x="1" y="1" width="16" height="16" rx="2" fill="none" stroke="#0b5a96" stroke-width="2"/></svg><div class="t" style="left:515px;top:428.8px;line-height:16px;font-size:12px;color:#222;font-weight:normal;">03/29/2021 08:58 AM</div><div class="t" style="left:643px;top:428.8px;line-height:16px;font-size:12px;color:#222;font-weight:normal;">Display cat</div><div class="t" style="left:766px;top:429.3px;line-height:15px;font-size:11px;color:#1666a6;font-weight:normal;">SO-0037173</div><div class="t" style="left:856px;top:429.3px;line-height:15px;font-size:11.1px;color:#1666a6;font-weight:normal;">SHO-0037173</div><div class="t" style="left:1118px;top:428.8px;line-height:16px;font-size:11.5px;color:#222;font-weight:normal;">0311</div><div class="t" style="left:1381px;top:428.8px;line-height:16px;font-size:11.5px;color:#222;font-weight:normal;">1</div><div class="t" style="left:1690px;top:429.9px;line-height:15px;font-size:11.4px;color:#1b87d8;font-weight:normal;">Ready to Ship</div><div class="t" style="left:1822px;top:428.8px;line-height:16px;font-size:11.6px;color:#222;font-weight:normal;">Spring Valley</div><svg class="a" style="left:484px;top:453px;" width="18" height="18" viewBox="0 0 18 18"><rect x="1" y="1" width="16" height="16" rx="2" fill="none" stroke="#0b5a96" stroke-width="2"/></svg><div class="t" style="left:515px;top:453.8px;line-height:16px;font-size:12px;color:#222;font-weight:normal;">03/29/2021 08:58 AM</div><div class="t" style="left:643px;top:453.8px;line-height:16px;font-size:12px;color:#222;font-weight:normal;">Display cat</div><div class="t" style="left:766px;top:454.3px;line-height:15px;font-size:11px;color:#1666a6;font-weight:normal;">SO-0037173</div><div class="t" style="left:856px;top:454.3px;line-height:15px;font-size:11.1px;color:#1666a6;font-weight:normal;">SHO-0037173</div><div class="t" style="left:1118px;top:453.8px;line-height:16px;font-size:11.5px;color:#222;font-weight:normal;">0311</div><div class="t" style="left:1381px;top:453.8px;line-height:16px;font-size:11.5px;color:#222;font-weight:normal;">1</div><div class="t" style="left:1690px;top:454.9px;line-height:15px;font-size:11.4px;color:#1b87d8;font-weight:normal;">Ready to Ship</div><div class="t" style="left:1822px;top:453.8px;line-height:16px;font-size:11.6px;color:#222;font-weight:normal;">Spring Valley</div><svg class="a" style="left:484px;top:478px;" width="18" height="18" viewBox="0 0 18 18"><rect x="1" y="1" width="16" height="16" rx="2" fill="none" stroke="#0b5a96" stroke-width="2"/></svg><div class="t" style="left:515px;top:478.8px;line-height:16px;font-size:12px;color:#222;font-weight:normal;">03/29/2021 08:58 AM</div><div class="t" style="left:643px;top:478.8px;line-height:16px;font-size:12px;color:#222;font-weight:normal;">Display cat</div><div class="t" style="left:766px;top:479.3px;line-height:15px;font-size:11px;color:#1666a6;font-weight:normal;">SO-0037173</div><div class="t" style="left:856px;top:479.3px;line-height:15px;font-size:11.1px;color:#1666a6;font-weight:normal;">SHO-0037173</div><div class="t" style="left:1118px;top:478.8px;line-height:16px;font-size:11.5px;color:#222;font-weight:normal;">0311</div><div class="t" style="left:1381px;top:478.8px;line-height:16px;font-size:11.5px;color:#222;font-weight:normal;">1</div><div class="t" style="left:1690px;top:479.9px;line-height:15px;font-size:11.4px;color:#1b87d8;font-weight:normal;">Ready to Ship</div><div class="t" style="left:1822px;top:478.8px;line-height:16px;font-size:11.6px;color:#222;font-weight:normal;">Spring Valley</div><svg class="a" style="left:484px;top:503px;" width="18" height="18" viewBox="0 0 18 18"><rect x="1" y="1" width="16" height="16" rx="2" fill="none" stroke="#0b5a96" stroke-width="2"/></svg><div class="t" style="left:515px;top:503.8px;line-height:16px;font-size:12px;color:#222;font-weight:normal;">03/29/2021 08:58 AM</div><div class="t" style="left:643px;top:503.8px;line-height:16px;font-size:12px;color:#222;font-weight:normal;">Display cat</div><div class="t" style="left:766px;top:504.3px;line-height:15px;font-size:11px;color:#1666a6;font-weight:normal;">SO-0037173</div><div class="t" style="left:856px;top:504.3px;line-height:15px;font-size:11.1px;color:#1666a6;font-weight:normal;">SHO-0037173</div><div class="t" style="left:1118px;top:503.8px;line-height:16px;font-size:11.5px;color:#222;font-weight:normal;">0311</div><div class="t" style="left:1381px;top:503.8px;line-height:16px;font-size:11.5px;color:#222;font-weight:normal;">1</div><div class="t" style="left:1690px;top:504.9px;line-height:15px;font-size:11.4px;color:#1b87d8;font-weight:normal;">Ready to Ship</div><div class="t" style="left:1822px;top:503.8px;line-height:16px;font-size:11.6px;color:#222;font-weight:normal;">Spring Valley</div><svg class="a" style="left:484px;top:528px;" width="18" height="18" viewBox="0 0 18 18"><rect x="1" y="1" width="16" height="16" rx="2" fill="none" stroke="#0b5a96" stroke-width="2"/></svg><div class="t" style="left:515px;top:528.8px;line-height:16px;font-size:12px;color:#222;font-weight:normal;">03/29/2021 08:58 AM</div><div class="t" style="left:643px;top:528.8px;line-height:16px;font-size:12px;color:#222;font-weight:normal;">Display cat</div><div class="t" style="left:766px;top:529.3px;line-height:15px;font-size:11px;color:#1666a6;font-weight:normal;">SO-0037173</div><div class="t" style="left:856px;top:529.3px;line-height:15px;font-size:11.1px;color:#1666a6;font-weight:normal;">SHO-0037173</div><div class="t" style="left:1118px;top:528.8px;line-height:16px;font-size:11.5px;color:#222;font-weight:normal;">0311</div><div class="t" style="left:1381px;top:528.8px;line-height:16px;font-size:11.5px;color:#222;font-weight:normal;">1</div><div class="t" style="left:1690px;top:529.9px;line-height:15px;font-size:11.4px;color:#1b87d8;font-weight:normal;">Ready to Ship</div><div class="t" style="left:1822px;top:528.8px;line-height:16px;font-size:11.6px;color:#222;font-weight:normal;">Spring Valley</div><svg class="a" style="left:484px;top:553px;" width="18" height="18" viewBox="0 0 18 18"><rect x="1" y="1" width="16" height="16" rx="2" fill="none" stroke="#0b5a96" stroke-width="2"/></svg><div class="t" style="left:515px;top:553.8px;line-height:16px;font-size:12px;color:#222;font-weight:normal;">03/29/2021 08:58 AM</div><div class="t" style="left:643px;top:553.8px;line-height:16px;font-size:12px;color:#222;font-weight:normal;">Display cat</div><div class="t" style="left:766px;top:554.3px;line-height:15px;font-size:11px;color:#1666a6;font-weight:normal;">SO-0037173</div><div class="t" style="left:856px;top:554.3px;line-height:15px;font-size:11.1px;color:#1666a6;font-weight:normal;">SHO-0037173</div><div class="t" style="left:1118px;top:553.8px;line-height:16px;font-size:11.5px;color:#222;font-weight:normal;">0311</div><div class="t" style="left:1381px;top:553.8px;line-height:16px;font-size:11.5px;color:#222;font-weight:normal;">1</div><div class="t" style="left:1690px;top:554.9px;line-height:15px;font-size:11.4px;color:#1b87d8;font-weight:normal;">Ready to Ship</div><div class="t" style="left:1822px;top:553.8px;line-height:16px;font-size:11.6px;color:#222;font-weight:normal;">Spring Valley</div><svg class="a" style="left:484px;top:578px;" width="18" height="18" viewBox="0 0 18 18"><rect x="1" y="1" width="16" height="16" rx="2" fill="none" stroke="#0b5a96" stroke-width="2"/></svg><div class="t" style="left:515px;top:578.8px;line-height:16px;font-size:12px;color:#222;font-weight:normal;">03/29/2021 08:58 AM</div><div class="t" style="left:643px;top:578.8px;line-height:16px;font-size:12px;color:#222;font-weight:normal;">Display cat</div><div class="t" style="left:766px;top:579.3px;line-height:15px;font-size:11px;color:#1666a6;font-weight:normal;">SO-0037173</div><div class="t" style="left:856px;top:579.3px;line-height:15px;font-size:11.1px;color:#1666a6;font-weight:normal;">SHO-0037173</div><div class="t" style="left:1118px;top:578.8px;line-height:16px;font-size:11.5px;color:#222;font-weight:normal;">0311</div><div class="t" style="left:1381px;top:578.8px;line-height:16px;font-size:11.5px;color:#222;font-weight:normal;">1</div><div class="t" style="left:1690px;top:579.9px;line-height:15px;font-size:11.4px;color:#1b87d8;font-weight:normal;">Ready to Ship</div><div class="t" style="left:1822px;top:578.8px;line-height:16px;font-size:11.6px;color:#222;font-weight:normal;">Spring Valley</div><svg class="a" style="left:484px;top:603px;" width="18" height="18" viewBox="0 0 18 18"><rect x="1" y="1" width="16" height="16" rx="2" fill="none" stroke="#0b5a96" stroke-width="2"/></svg><div class="t" style="left:515px;top:603.8px;line-height:16px;font-size:12px;color:#222;font-weight:normal;">03/29/2021 08:58 AM</div><div class="t" style="left:643px;top:603.8px;line-height:16px;font-size:12px;color:#222;font-weight:normal;">Display cat</div><div class="t" style="left:766px;top:604.3px;line-height:15px;font-size:11px;color:#1666a6;font-weight:normal;">SO-0037173</div><div class="t" style="left:856px;top:604.3px;line-height:15px;font-size:11.1px;color:#1666a6;font-weight:normal;">SHO-0037173</div><div class="t" style="left:1118px;top:603.8px;line-height:16px;font-size:11.5px;color:#222;font-weight:normal;">0311</div><div class="t" style="left:1381px;top:603.8px;line-height:16px;font-size:11.5px;color:#222;font-weight:normal;">1</div><div class="t" style="left:1690px;top:604.9px;line-height:15px;font-size:11.4px;color:#1b87d8;font-weight:normal;">Ready to Ship</div><div class="t" style="left:1822px;top:603.8px;line-height:16px;font-size:11.6px;color:#222;font-weight:normal;">Spring Valley</div><svg class="a" style="left:484px;top:628px;" width="18" height="18" viewBox="0 0 18 18"><rect x="1" y="1" width="16" height="16" rx="2" fill="none" stroke="#0b5a96" stroke-width="2"/></svg><div class="t" style="left:515px;top:628.8px;line-height:16px;font-size:12px;color:#222;font-weight:normal;">03/29/2021 08:58 AM</div><div class="t" style="left:643px;top:628.8px;line-height:16px;font-size:12px;color:#222;font-weight:normal;">Display cat</div><div class="t" style="left:766px;top:629.3px;line-height:15px;font-size:11px;color:#1666a6;font-weight:normal;">SO-0037173</div><div class="t" style="left:856px;top:629.3px;line-height:15px;font-size:11.1px;color:#1666a6;font-weight:normal;">SHO-0037173</div><div class="t" style="left:1118px;top:628.8px;line-height:16px;font-size:11.5px;color:#222;font-weight:normal;">0311</div><div class="t" style="left:1381px;top:628.8px;line-height:16px;font-size:11.5px;color:#222;font-weight:normal;">1</div><div class="t" style="left:1690px;top:629.9px;line-height:15px;font-size:11.4px;color:#1b87d8;font-weight:normal;">Ready to Ship</div><div class="t" style="left:1822px;top:628.8px;line-height:16px;font-size:11.6px;color:#222;font-weight:normal;">Spring Valley</div><svg class="a" style="left:484px;top:653px;" width="18" height="18" viewBox="0 0 18 18"><rect x="1" y="1" width="16" height="16" rx="2" fill="none" stroke="#0b5a96" stroke-width="2"/></svg><div class="t" style="left:515px;top:653.8px;line-height:16px;font-size:12px;color:#222;font-weight:normal;">03/29/2021 08:58 AM</div><div class="t" style="left:643px;top:653.8px;line-height:16px;font-size:12px;color:#222;font-weight:normal;">Display cat</div><div class="t" style="left:766px;top:654.3px;line-height:15px;font-size:11px;color:#1666a6;font-weight:normal;">SO-0037173</div><div class="t" style="left:856px;top:654.3px;line-height:15px;font-size:11.1px;color:#1666a6;font-weight:normal;">SHO-0037173</div><div class="t" style="left:1118px;top:653.8px;line-height:16px;font-size:11.5px;color:#222;font-weight:normal;">0311</div><div class="t" style="left:1381px;top:653.8px;line-height:16px;font-size:11.5px;color:#222;font-weight:normal;">1</div><div class="t" style="left:1690px;top:654.9px;line-height:15px;font-size:11.4px;color:#1b87d8;font-weight:normal;">Ready to Ship</div><div class="t" style="left:1822px;top:653.8px;line-height:16px;font-size:11.6px;color:#222;font-weight:normal;">Spring Valley</div><svg class="a" style="left:484px;top:678px;" width="18" height="18" viewBox="0 0 18 18"><rect x="1" y="1" width="16" height="16" rx="2" fill="none" stroke="#0b5a96" stroke-width="2"/></svg><div class="t" style="left:515px;top:678.8px;line-height:16px;font-size:12px;color:#222;font-weight:normal;">03/29/2021 08:58 AM</div><div class="t" style="left:643px;top:678.8px;line-height:16px;font-size:12px;color:#222;font-weight:normal;">Display cat</div><div class="t" style="left:766px;top:679.3px;line-height:15px;font-size:11px;color:#1666a6;font-weight:normal;">SO-0037173</div><div class="t" style="left:856px;top:679.3px;line-height:15px;font-size:11.1px;color:#1666a6;font-weight:normal;">SHO-0037173</div><div class="t" style="left:1118px;top:678.8px;line-height:16px;font-size:11.5px;color:#222;font-weight:normal;">0311</div><div class="t" style="left:1381px;top:678.8px;line-height:16px;font-size:11.5px;color:#222;font-weight:normal;">1</div><div class="t" style="left:1690px;top:679.9px;line-height:15px;font-size:11.4px;color:#1b87d8;font-weight:normal;">Ready to Ship</div><div class="t" style="left:1822px;top:678.8px;line-height:16px;font-size:11.6px;color:#222;font-weight:normal;">Spring Valley</div><svg class="a" style="left:484px;top:703px;" width="18" height="18" viewBox="0 0 18 18"><rect x="1" y="1" width="16" height="16" rx="2" fill="none" stroke="#0b5a96" stroke-width="2"/></svg><div class="t" style="left:515px;top:703.8px;line-height:16px;font-size:12px;color:#222;font-weight:normal;">03/29/2021 08:58 AM</div><div class="t" style="left:643px;top:703.8px;line-height:16px;font-size:12px;color:#222;font-weight:normal;">Display cat</div><div class="t" style="left:766px;top:704.3px;line-height:15px;font-size:11px;color:#1666a6;font-weight:normal;">SO-0037173</div><div class="t" style="left:856px;top:704.3px;line-height:15px;font-size:11.1px;color:#1666a6;font-weight:normal;">SHO-0037173</div><div class="t" style="left:1118px;top:703.8px;line-height:16px;font-size:11.5px;color:#222;font-weight:normal;">0311</div><div class="t" style="left:1381px;top:703.8px;line-height:16px;font-size:11.5px;color:#222;font-weight:normal;">1</div><div class="t" style="left:1690px;top:704.9px;line-height:15px;font-size:11.4px;color:#1b87d8;font-weight:normal;">Ready to Ship</div><div class="t" style="left:1822px;top:703.8px;line-height:16px;font-size:11.6px;color:#222;font-weight:normal;">Iqos store</div><svg class="a" style="left:484px;top:728px;" width="18" height="18" viewBox="0 0 18 18"><rect x="1" y="1" width="16" height="16" rx="2" fill="none" stroke="#0b5a96" stroke-width="2"/></svg><div class="t" style="left:515px;top:728.8px;line-height:16px;font-size:12px;color:#222;font-weight:normal;">03/29/2021 08:58 AM</div><div class="t" style="left:643px;top:728.8px;line-height:16px;font-size:12px;color:#222;font-weight:normal;">Display cat</div><div class="t" style="left:766px;top:729.3px;line-height:15px;font-size:11px;color:#1666a6;font-weight:normal;">SO-0037173</div><div class="t" style="left:856px;top:729.3px;line-height:15px;font-size:11.1px;color:#1666a6;font-weight:normal;">SHO-0037173</div><div class="t" style="left:1118px;top:728.8px;line-height:16px;font-size:11.5px;color:#222;font-weight:normal;">0311</div><div class="t" style="left:1381px;top:728.8px;line-height:16px;font-size:11.5px;color:#222;font-weight:normal;">1</div><div class="t" style="left:1690px;top:729.9px;line-height:15px;font-size:11.4px;color:#1b87d8;font-weight:normal;">Ready to Ship</div><div class="t" style="left:1822px;top:728.8px;line-height:16px;font-size:11.6px;color:#222;font-weight:normal;">Spring Valley</div><svg class="a" style="left:484px;top:753px;" width="18" height="18" viewBox="0 0 18 18"><rect x="1" y="1" width="16" height="16" rx="2" fill="none" stroke="#0b5a96" stroke-width="2"/></svg><div class="t" style="left:515px;top:753.8px;line-height:16px;font-size:12px;color:#222;font-weight:normal;">03/29/2021 08:58 AM</div><div class="t" style="left:643px;top:753.8px;line-height:16px;font-size:12px;color:#222;font-weight:normal;">Display cat</div><div class="t" style="left:766px;top:754.3px;line-height:15px;font-size:11px;color:#1666a6;font-weight:normal;">SO-0037173</div><div class="t" style="left:856px;top:754.3px;line-height:15px;font-size:11.1px;color:#1666a6;font-weight:normal;">SHO-0037173</div><div class="t" style="left:1118px;top:753.8px;line-height:16px;font-size:11.5px;color:#222;font-weight:normal;">0311</div><div class="t" style="left:1381px;top:753.8px;line-height:16px;font-size:11.5px;color:#222;font-weight:normal;">1</div><div class="t" style="left:1690px;top:754.9px;line-height:15px;font-size:11.4px;color:#1b87d8;font-weight:normal;">Ready to Ship</div><div class="t" style="left:1822px;top:753.8px;line-height:16px;font-size:11.6px;color:#222;font-weight:normal;">Spring Valley</div><svg class="a" style="left:484px;top:778px;" width="18" height="18" viewBox="0 0 18 18"><rect x="1" y="1" width="16" height="16" rx="2" fill="none" stroke="#0b5a96" stroke-width="2"/></svg><div class="t" style="left:515px;top:778.8px;line-height:16px;font-size:12px;color:#222;font-weight:normal;">03/29/2021 08:58 AM</div><div class="t" style="left:643px;top:778.8px;line-height:16px;font-size:12px;color:#222;font-weight:normal;">Display cat</div><div class="t" style="left:766px;top:779.3px;line-height:15px;font-size:11px;color:#1666a6;font-weight:normal;">SO-0037173</div><div class="t" style="left:856px;top:779.3px;line-height:15px;font-size:11.1px;color:#1666a6;font-weight:normal;">SHO-0037173</div><div class="t" style="left:1118px;top:778.8px;line-height:16px;font-size:11.5px;color:#222;font-weight:normal;">0311</div><div class="t" style="left:1381px;top:778.8px;line-height:16px;font-size:11.5px;color:#222;font-weight:normal;">1</div><div class="t" style="left:1690px;top:779.9px;line-height:15px;font-size:11.4px;color:#1b87d8;font-weight:normal;">Ready to Ship</div><div class="t" style="left:1822px;top:778.8px;line-height:16px;font-size:11.6px;color:#222;font-weight:normal;">Spring Valley</div><svg class="a" style="left:484px;top:803px;" width="18" height="18" viewBox="0 0 18 18"><rect x="1" y="1" width="16" height="16" rx="2" fill="none" stroke="#0b5a96" stroke-width="2"/></svg><div class="t" style="left:515px;top:803.8px;line-height:16px;font-size:12px;color:#222;font-weight:normal;">03/29/2021 08:58 AM</div><div class="t" style="left:643px;top:803.8px;line-height:16px;font-size:12px;color:#222;font-weight:normal;">Display cat</div><div class="t" style="left:766px;top:804.3px;line-height:15px;font-size:11px;color:#1666a6;font-weight:normal;">SO-0037173</div><div class="t" style="left:856px;top:804.3px;line-height:15px;font-size:11.1px;color:#1666a6;font-weight:normal;">SHO-0037173</div><div class="t" style="left:1118px;top:803.8px;line-height:16px;font-size:11.5px;color:#222;font-weight:normal;">0311</div><div class="t" style="left:1381px;top:803.8px;line-height:16px;font-size:11.5px;color:#222;font-weight:normal;">1</div><div class="t" style="left:1690px;top:804.9px;line-height:15px;font-size:11.4px;color:#1b87d8;font-weight:normal;">Ready to Ship</div><div class="t" style="left:1822px;top:803.8px;line-height:16px;font-size:11.6px;color:#222;font-weight:normal;">Spring Valley</div><svg class="a" style="left:484px;top:828px;" width="18" height="18" viewBox="0 0 18 18"><rect x="1" y="1" width="16" height="16" rx="2" fill="none" stroke="#0b5a96" stroke-width="2"/></svg><div class="t" style="left:515px;top:828.8px;line-height:16px;font-size:12px;color:#222;font-weight:normal;">03/29/2021 08:58 AM</div><div class="t" style="left:643px;top:828.8px;line-height:16px;font-size:12px;color:#222;font-weight:normal;">Display cat</div><div class="t" style="left:766px;top:829.3px;line-height:15px;font-size:11px;color:#1666a6;font-weight:normal;">SO-0037173</div><div class="t" style="left:856px;top:829.3px;line-height:15px;font-size:11.1px;color:#1666a6;font-weight:normal;">SHO-0037173</div><div class="t" style="left:1118px;top:828.8px;line-height:16px;font-size:11.5px;color:#222;font-weight:normal;">0311</div><div class="t" style="left:1381px;top:828.8px;line-height:16px;font-size:11.5px;color:#222;font-weight:normal;">1</div><div class="t" style="left:1690px;top:829.9px;line-height:15px;font-size:11.4px;color:#1b87d8;font-weight:normal;">Ready to Ship</div><div class="t" style="left:1822px;top:828.8px;line-height:16px;font-size:11.6px;color:#222;font-weight:normal;">Spring Valley</div><svg class="a" style="left:484px;top:853px;" width="18" height="18" viewBox="0 0 18 18"><rect x="1" y="1" width="16" height="16" rx="2" fill="none" stroke="#0b5a96" stroke-width="2"/></svg><div class="t" style="left:515px;top:853.8px;line-height:16px;font-size:12px;color:#222;font-weight:normal;">03/29/2021 08:58 AM</div><div class="t" style="left:643px;top:853.8px;line-height:16px;font-size:12px;color:#222;font-weight:normal;">Display cat</div><div class="t" style="left:766px;top:854.3px;line-height:15px;font-size:11px;color:#1666a6;font-weight:normal;">SO-0037173</div><div class="t" style="left:856px;top:854.3px;line-height:15px;font-size:11.1px;color:#1666a6;font-weight:normal;">SHO-0037173</div><div class="t" style="left:1118px;top:853.8px;line-height:16px;font-size:11.5px;color:#222;font-weight:normal;">0311</div><div class="t" style="left:1381px;top:853.8px;line-height:16px;font-size:11.5px;color:#222;font-weight:normal;">1</div><div class="t" style="left:1690px;top:854.9px;line-height:15px;font-size:11.4px;color:#1b87d8;font-weight:normal;">Ready to Ship</div><div class="t" style="left:1822px;top:853.8px;line-height:16px;font-size:11.6px;color:#222;font-weight:normal;">Spring Valley</div><svg class="a" style="left:484px;top:878px;" width="18" height="18" viewBox="0 0 18 18"><rect x="1" y="1" width="16" height="16" rx="2" fill="none" stroke="#0b5a96" stroke-width="2"/></svg><div class="t" style="left:515px;top:878.8px;line-height:16px;font-size:12px;color:#222;font-weight:normal;">03/29/2021 08:58 AM</div><div class="t" style="left:643px;top:878.8px;line-height:16px;font-size:12px;color:#222;font-weight:normal;">Display cat</div><div class="t" style="left:766px;top:879.3px;line-height:15px;font-size:11px;color:#1666a6;font-weight:normal;">SO-0037173</div><div class="t" style="left:856px;top:879.3px;line-height:15px;font-size:11.1px;color:#1666a6;font-weight:normal;">SHO-0037173</div><div class="t" style="left:1118px;top:878.8px;line-height:16px;font-size:11.5px;color:#222;font-weight:normal;">0311</div><div class="t" style="left:1381px;top:878.8px;line-height:16px;font-size:11.5px;color:#222;font-weight:normal;">1</div><div class="t" style="left:1690px;top:879.9px;line-height:15px;font-size:11.4px;color:#1b87d8;font-weight:normal;">Ready to Ship</div><div class="t" style="left:1822px;top:878.8px;line-height:16px;font-size:11.6px;color:#222;font-weight:normal;">Spring Valley</div><svg class="a" style="left:484px;top:903px;" width="18" height="18" viewBox="0 0 18 18"><rect x="1" y="1" width="16" height="16" rx="2" fill="none" stroke="#0b5a96" stroke-width="2"/></svg><div class="t" style="left:515px;top:903.8px;line-height:16px;font-size:12px;color:#222;font-weight:normal;">03/29/2021 08:58 AM</div><div class="t" style="left:643px;top:903.8px;line-height:16px;font-size:12px;color:#222;font-weight:normal;">Display cat</div><div class="t" style="left:766px;top:904.3px;line-height:15px;font-size:11px;color:#1666a6;font-weight:normal;">SO-0037173</div><div class="t" style="left:856px;top:904.3px;line-height:15px;font-size:11.1px;color:#1666a6;font-weight:normal;">SHO-0037173</div><div class="t" style="left:1118px;top:903.8px;line-height:16px;font-size:11.5px;color:#222;font-weight:normal;">0311</div><div class="t" style="left:1381px;top:903.8px;line-height:16px;font-size:11.5px;color:#222;font-weight:normal;">1</div><div class="t" style="left:1690px;top:904.9px;line-height:15px;font-size:11.4px;color:#1b87d8;font-weight:normal;">Ready to Ship</div><div class="t" style="left:1822px;top:903.8px;line-height:16px;font-size:11.6px;color:#222;font-weight:normal;">Spring Valley</div><svg class="a" style="left:484px;top:928px;" width="18" height="18" viewBox="0 0 18 18"><rect x="1" y="1" width="16" height="16" rx="2" fill="none" stroke="#0b5a96" stroke-width="2"/></svg><div class="t" style="left:515px;top:928.8px;line-height:16px;font-size:12px;color:#222;font-weight:normal;">03/29/2021 08:58 AM</div><div class="t" style="left:643px;top:928.8px;line-height:16px;font-size:12px;color:#222;font-weight:normal;">Display cat</div><div class="t" style="left:766px;top:929.3px;line-height:15px;font-size:11px;color:#1666a6;font-weight:normal;">SO-0037173</div><div class="t" style="left:856px;top:929.3px;line-height:15px;font-size:11.1px;color:#1666a6;font-weight:normal;">SHO-0037173</div><div class="t" style="left:1118px;top:928.8px;line-height:16px;font-size:11.5px;color:#222;font-weight:normal;">0311</div><div class="t" style="left:1381px;top:928.8px;line-height:16px;font-size:11.5px;color:#222;font-weight:normal;">1</div><div class="t" style="left:1690px;top:929.9px;line-height:15px;font-size:11.4px;color:#1b87d8;font-weight:normal;">Ready to Ship</div><div class="t" style="left:1822px;top:928.8px;line-height:16px;font-size:11.6px;color:#222;font-weight:normal;">Spring Valley</div><svg class="a" style="left:484px;top:953px;" width="18" height="18" viewBox="0 0 18 18"><rect x="1" y="1" width="16" height="16" rx="2" fill="none" stroke="#0b5a96" stroke-width="2"/></svg><div class="t" style="left:515px;top:953.8px;line-height:16px;font-size:12px;color:#222;font-weight:normal;">03/29/2021 08:58 AM</div><div class="t" style="left:643px;top:953.8px;line-height:16px;font-size:12px;color:#222;font-weight:normal;">Display cat</div><div class="t" style="left:766px;top:954.3px;line-height:15px;font-size:11px;color:#1666a6;font-weight:normal;">SO-0037173</div><div class="t" style="left:856px;top:954.3px;line-height:15px;font-size:11.1px;color:#1666a6;font-weight:normal;">SHO-0037173</div><div class="t" style="left:1118px;top:953.8px;line-height:16px;font-size:11.5px;color:#222;font-weight:normal;">0311</div><div class="t" style="left:1381px;top:953.8px;line-height:16px;font-size:11.5px;color:#222;font-weight:normal;">1</div><div class="t" style="left:1690px;top:954.9px;line-height:15px;font-size:11.4px;color:#1b87d8;font-weight:normal;">Ready to Ship</div><div class="t" style="left:1822px;top:953.8px;line-height:16px;font-size:11.6px;color:#222;font-weight:normal;">Spring Valley</div><svg class="a" style="left:484px;top:978px;" width="18" height="18" viewBox="0 0 18 18"><rect x="1" y="1" width="16" height="16" rx="2" fill="none" stroke="#0b5a96" stroke-width="2"/></svg><div class="t" style="left:515px;top:978.8px;line-height:16px;font-size:12px;color:#222;font-weight:normal;">03/29/2021 08:58 AM</div><div class="t" style="left:643px;top:978.8px;line-height:16px;font-size:12px;color:#222;font-weight:normal;">Display cat</div><div class="t" style="left:766px;top:979.3px;line-height:15px;font-size:11px;color:#1666a6;font-weight:normal;">SO-0037173</div><div class="t" style="left:856px;top:979.3px;line-height:15px;font-size:11.1px;color:#1666a6;font-weight:normal;">SHO-0037173</div><div class="t" style="left:1118px;top:978.8px;line-height:16px;font-size:11.5px;color:#222;font-weight:normal;">0311</div><div class="t" style="left:1381px;top:978.8px;line-height:16px;font-size:11.5px;color:#222;font-weight:normal;">1</div><div class="t" style="left:1690px;top:979.9px;line-height:15px;font-size:11.4px;color:#1b87d8;font-weight:normal;">Ready to Ship</div><div class="t" style="left:1822px;top:978.8px;line-height:16px;font-size:11.6px;color:#222;font-weight:normal;">Spring Valley</div><svg class="a" style="left:484px;top:1003px;" width="18" height="18" viewBox="0 0 18 18"><rect x="1" y="1" width="16" height="16" rx="2" fill="none" stroke="#0b5a96" stroke-width="2"/></svg><div class="t" style="left:515px;top:1003.8px;line-height:16px;font-size:12px;color:#222;font-weight:normal;">03/31/2021 11:41 AM</div><div class="t" style="left:643px;top:1003.8px;line-height:16px;font-size:12px;color:#222;font-weight:normal;">Display cat</div><div class="t" style="left:766px;top:1004.3px;line-height:15px;font-size:11px;color:#1666a6;font-weight:normal;">SO-0037189</div><div class="t" style="left:856px;top:1004.3px;line-height:15px;font-size:11.1px;color:#1666a6;font-weight:normal;">SHO-0037189</div><div class="t" style="left:1118px;top:1003.8px;line-height:16px;font-size:11.5px;color:#222;font-weight:normal;">0311</div><div class="t" style="left:1381px;top:1003.8px;line-height:16px;font-size:11.5px;color:#222;font-weight:normal;">1</div><div class="t" style="left:1690px;top:1004.9px;line-height:15px;font-size:11.4px;color:#1b87d8;font-weight:normal;">Ready to Ship</div><div class="t" style="left:1822px;top:1003.8px;line-height:16px;font-size:11.6px;color:#222;font-weight:normal;">Spring Valley</div><div class="a" style="left:484px;top:1028px;width:18px;height:3px;overflow:hidden"><svg class="a" style="left:0px;top:0px;" width="18" height="18" viewBox="0 0 18 18"><rect x="1" y="1" width="16" height="16" rx="2" fill="none" stroke="#0b5a96" stroke-width="2"/></svg></div><div class="a" style="left:1909px;top:287px;width:8px;height:437px;background:#f0f0f0"></div><svg class="a" style="left:1907.5px;top:275.75px;" width="11" height="6.5" viewBox="0 0 11 6.5"><path d="M1 5.5L5.5 1L10 5.5" fill="none" stroke="#e6e6e6" stroke-width="1"/></svg><svg class="a" style="left:1907.5px;top:1027.75px;" width="11" height="6.5" viewBox="0 0 11 6.5"><path d="M1 1L5.5 5.5L10 1" fill="none" stroke="#e6e6e6" stroke-width="1"/></svg><div class="a" style="left:520px;top:278px;width:1152px;height:1px;background:#f4f4f4"></div><div class="a" style="left:521px;top:279px;width:1150px;height:700px;background:#2b2b2b"></div><div class="a" style="left:522px;top:280px;width:1148px;height:35px;background:#434343"></div><svg class="a" style="left:538px;top:286px;" width="22" height="22" viewBox="0 0 22 22"><circle cx="11" cy="11" r="9" fill="#fbfbfb"/><path d="M11 3.7 A7.3 7.3 0 0 0 11 18.3 Z" fill="#0a5e9c"/><path d="M8 8.4H11M8 13.6H11" stroke="#ffffff" stroke-width="1.4"/><path d="M11 8.4H14M11 13.6H14" stroke="#0a5e9c" stroke-width="1.4"/><path d="M6.8 11H11" stroke="#c9dcea" stroke-width="1.8"/><path d="M11 11H15.2" stroke="#3f86bf" stroke-width="1.8"/></svg><div class="t" style="left:576px;top:289.5px;line-height:18px;font-size:13.2px;color:#f0f0f0;font-weight:normal;">Pick List</div><svg class="a" style="left:1581px;top:291px;" width="12" height="12" viewBox="0 0 12 12"><rect x="0.75" y="0.75" width="10.5" height="10.5" fill="none" stroke="#eee" stroke-width="1.3"/></svg><svg class="a" style="left:1635.5px;top:290.5px;" width="13" height="13" viewBox="0 0 13 13"><path d="M1 1L12 12M12 1L1 12" stroke="#eeeeee" stroke-width="1.3"/></svg><div class="a" style="left:522px;top:315px;width:199px;height:663px;background:#e4e4e4"></div><div class="a" style="left:721px;top:315px;width:1px;height:663px;background:#9a9a9a"></div><div class="a" style="left:722px;top:315px;width:948px;height:663px;background:#ffffff"></div><div class="t" style="left:532px;top:326.7px;line-height:19px;font-size:14px;color:#111;font-weight:bold;">Filters</div><svg class="a" style="left:583px;top:329px;" width="17" height="13" viewBox="0 0 17 13"><path d="M0 1.2H17M3 6.2H14M6 11.2H11" stroke="#0b5a96" stroke-width="2"/></svg><svg class="a" style="left:662px;top:327px;" width="20" height="16" viewBox="0 0 20 16"><path d="M12.6 2.7A5.7 5.7 0 0 0 4.3 8.2" fill="none" stroke="#0b5a96" stroke-width="1.7"/><path d="M1 8.1H7.6L4.3 11.4Z" fill="#0b5a96"/><path d="M7.3 13.4A5.8 5.8 0 0 0 15.8 7.8" fill="none" stroke="#0b5a96" stroke-width="1.7"/><path d="M12.5 7.9H19.1L15.8 4.6Z" fill="#0b5a96"/></svg><svg class="a" style="left:692px;top:327px;" width="16" height="16" viewBox="0 0 16 16"><circle cx="8" cy="8" r="8" fill="#0b5a96"/><path d="M5.1 5.1L10.9 10.9M10.9 5.1L5.1 10.9" stroke="#fff" stroke-width="1.3"/></svg><div class="t" style="left:532px;top:360.0px;line-height:16px;font-size:11.5px;color:#555;font-weight:normal;">Order #:</div><div class="a" style="left:533px;top:380px;width:177px;height:23px;background:#fff;border-radius:2px"></div><div class="t" style="left:540px;top:384.0px;line-height:15px;font-size:11.2px;color:#222;font-weight:normal;">PC-0000369,PC-0000370,PC-00</div><div class="t" style="left:532px;top:413.0px;line-height:16px;font-size:11.5px;color:#555;font-weight:normal;">Order Date:</div><div class="a" style="left:532px;top:432px;width:179px;height:23px;background:#fff;border-radius:2px"></div><div class="t" style="left:537px;top:436.0px;line-height:16px;font-size:11.8px;color:#a3a3a3;font-weight:normal;">Select date</div><svg class="a" style="left:693px;top:434.5px;" width="16" height="17" viewBox="0 0 16 17"><rect x="1.5" y="3.5" width="13" height="12" rx="1.5" fill="none" stroke="#777" stroke-width="1.5"/><path d="M1.5 3.5H14.5V7H1.5Z" fill="#777"/><path d="M4.5 1V4M11.5 1V4" stroke="#777" stroke-width="1.5"/><path d="M4.5 10.5h1.3M7.4 10.5h1.3M10.3 10.5h1.3" stroke="#777" stroke-width="1.3"/></svg><div class="t" style="left:532px;top:464.0px;line-height:16px;font-size:11.5px;color:#555;font-weight:normal;">Store:</div><div class="a" style="left:532px;top:483px;width:179px;height:25px;background:#fff;border-radius:2px"></div><div class="t" style="left:537px;top:488.0px;line-height:16px;font-size:11.8px;color:#a3a3a3;font-weight:normal;">Select store</div><svg class="a" style="left:697.25px;top:492.0px;" width="9.5" height="7" viewBox="0 0 9.5 7"><path d="M0 0H9.5L4.75 7Z" fill="#a9a9a9"/></svg><div class="t" style="left:532px;top:517.0px;line-height:16px;font-size:11.5px;color:#555;font-weight:normal;">SHO #:</div><div class="a" style="left:533px;top:537px;width:177px;height:23px;background:#fff;border-radius:2px"></div><div class="t" style="left:538px;top:541.0px;line-height:16px;font-size:11.8px;color:#a3a3a3;font-weight:normal;">Enter SHO #</div><div class="t" style="left:532px;top:570.0px;line-height:16px;font-size:11.5px;color:#555;font-weight:normal;">Customer:</div><div class="a" style="left:532px;top:589px;width:179px;height:25px;background:#fff;border-radius:2px"></div><div class="t" style="left:537px;top:594.0px;line-height:16px;font-size:11.8px;color:#a3a3a3;font-weight:normal;">Select customer</div><svg class="a" style="left:697.25px;top:598.0px;" width="9.5" height="7" viewBox="0 0 9.5 7"><path d="M0 0H9.5L4.75 7Z" fill="#a9a9a9"/></svg><div class="t" style="left:532px;top:623.0px;line-height:16px;font-size:11.5px;color:#555;font-weight:normal;">Memo:</div><div class="a" style="left:533px;top:643px;width:177px;height:23px;background:#fff;border-radius:2px"></div><div class="t" style="left:538px;top:647.0px;line-height:16px;font-size:11.8px;color:#a3a3a3;font-weight:normal;">Enter memo</div><div class="t" style="left:532px;top:676.0px;line-height:16px;font-size:11.5px;color:#555;font-weight:normal;">Picker:</div><div class="a" style="left:532px;top:695px;width:179px;height:25px;background:#fff;border-radius:2px"></div><div class="t" style="left:537px;top:700.0px;line-height:16px;font-size:11.8px;color:#a3a3a3;font-weight:normal;">Select Picker</div><svg class="a" style="left:697.25px;top:704.0px;" width="9.5" height="7" viewBox="0 0 9.5 7"><path d="M0 0H9.5L4.75 7Z" fill="#a9a9a9"/></svg><div class="t" style="left:532px;top:731.0px;line-height:18px;font-size:13.5px;color:#0b5a96;font-weight:normal;">Shipping Zones</div><svg class="a" style="left:533px;top:760.7px;" width="18" height="18" viewBox="0 0 18 18"><rect x="1" y="1" width="16" height="16" rx="2" fill="none" stroke="#0b5a96" stroke-width="2"/></svg><div class="t" style="left:561px;top:761.7px;line-height:16px;font-size:12px;color:#2a2a2a;font-weight:normal;">Brooklyn</div><svg class="a" style="left:533px;top:785.7px;" width="18" height="18" viewBox="0 0 18 18"><rect x="1" y="1" width="16" height="16" rx="2" fill="none" stroke="#0b5a96" stroke-width="2"/></svg><div class="t" style="left:561px;top:786.7px;line-height:16px;font-size:12px;color:#2a2a2a;font-weight:normal;">New Jersey</div><svg class="a" style="left:533px;top:810.7px;" width="18" height="18" viewBox="0 0 18 18"><rect x="1" y="1" width="16" height="16" rx="2" fill="none" stroke="#0b5a96" stroke-width="2"/></svg><div class="t" style="left:561px;top:811.7px;line-height:16px;font-size:12px;color:#2a2a2a;font-weight:normal;">Upstate New York</div><svg class="a" style="left:533px;top:835.7px;" width="18" height="18" viewBox="0 0 18 18"><rect x="1" y="1" width="16" height="16" rx="2" fill="none" stroke="#0b5a96" stroke-width="2"/></svg><div class="t" style="left:561px;top:836.7px;line-height:16px;font-size:12px;color:#2a2a2a;font-weight:normal;">Monsey</div><div class="t" style="left:732px;top:327.8px;line-height:15px;font-size:11.3px;color:#0b5a96;font-weight:bold;">READY TO PICK (3)</div><div class="t" style="left:859px;top:328.8px;line-height:15px;font-size:11.3px;color:#0b5a96;font-weight:bold;">PICKED (0)</div><div class="t" style="left:939px;top:328.8px;line-height:15px;font-size:11.3px;color:#0b5a96;font-weight:bold;">CLOSED (0)</div><div class="a" style="left:722px;top:353px;width:127px;height:2px;background:#0b5a96"></div><div class="a" style="left:722px;top:355px;width:948px;height:35px;background:#ededed"></div><div class="t" style="left:732px;top:364.5px;line-height:16px;font-size:11.5px;color:#666;font-weight:normal;">Picker:</div><div class="a" style="left:780px;top:360px;width:120px;height:25px;background:#fff;border-radius:2px"></div><div class="t" style="left:785.5px;top:365.0px;line-height:16px;font-size:11.8px;color:#a3a3a3;font-weight:normal;">Picker</div><svg class="a" style="left:882.25px;top:369.0px;" width="9.5" height="7" viewBox="0 0 9.5 7"><path d="M0 0H9.5L4.75 7Z" fill="#a9a9a9"/></svg><div class="a" style="left:910px;top:360px;width:75px;height:25px;background:#c9c9c9;border-radius:2px"></div><div class="t" style="left:910px;top:360.7px;width:75px;line-height:25px;text-align:center;font-size:12px;color:#f4f4f4;transform:scaleX(0.88)">ASSIGN</div><div class="a" style="left:722px;top:390px;width:947px;height:32px;background:#fff"></div><div class="a" style="left:722px;top:421px;width:947px;height:1px;background:#d8d8d8"></div><div class="a" style="left:722px;top:390px;width:947px;height:1px;background:#e0e0e0"></div><div class="a" style="left:722px;top:422px;width:947px;height:25px;background:#ebf2f6"></div><div class="a" style="left:722px;top:447px;width:947px;height:25px;background:#fff"></div><div class="a" style="left:722px;top:472px;width:947px;height:25px;background:#ebf2f6"></div><div class="a" style="left:751px;top:390px;width:1px;height:107px;background:#dfe5ea"></div><div class="a" style="left:866px;top:390px;width:1px;height:107px;background:#dfe5ea"></div><div class="a" style="left:983px;top:390px;width:1px;height:107px;background:#dfe5ea"></div><div class="a" style="left:1094px;top:390px;width:1px;height:107px;background:#dfe5ea"></div><div class="a" style="left:1210px;top:390px;width:1px;height:107px;background:#dfe5ea"></div><div class="a" style="left:1324px;top:390px;width:1px;height:107px;background:#dfe5ea"></div><div class="a" style="left:1439px;top:390px;width:1px;height:107px;background:#dfe5ea"></div><div class="a" style="left:1553px;top:390px;width:1px;height:107px;background:#dfe5ea"></div><div class="a" style="left:1669px;top:390px;width:1px;height:107px;background:#dfe5ea"></div><svg class="a" style="left:728px;top:397px;" width="18" height="18" viewBox="0 0 18 18"><rect x="1" y="1" width="16" height="16" rx="2" fill="none" stroke="#0b5a96" stroke-width="2"/></svg><div class="t" style="left:757px;top:399.0px;line-height:16px;font-size:12px;color:#222;font-weight:normal;">Number</div><div class="t" style="left:872px;top:399.0px;line-height:16px;font-size:12px;color:#222;font-weight:normal;">Date</div><div class="t" style="left:987px;top:399.0px;line-height:16px;font-size:12px;color:#222;font-weight:normal;">Store</div><div class="t" style="left:1100px;top:399.0px;line-height:16px;font-size:12px;color:#222;font-weight:normal;">SHO #</div><div class="t" style="left:1216px;top:399.0px;line-height:16px;font-size:12px;color:#222;font-weight:normal;">Customer</div><div class="t" style="left:1330px;top:399.0px;line-height:16px;font-size:12px;color:#222;font-weight:normal;">Memo</div><div class="t" style="left:1445px;top:399.0px;line-height:16px;font-size:12px;color:#222;font-weight:normal;">Picker</div><div class="t" style="left:1559px;top:399.0px;line-height:16px;font-size:12px;color:#222;font-weight:normal;">Zone</div><svg class="a" style="left:728px;top:424.8px;" width="18" height="18" viewBox="0 0 18 18"><rect x="1" y="1" width="16" height="16" rx="2" fill="none" stroke="#0b5a96" stroke-width="2"/></svg><div class="t" style="left:759px;top:427.3px;line-height:15px;font-size:11.3px;color:#222;font-weight:normal;">PC-0000371</div><div class="t" style="left:873px;top:426.8px;line-height:16px;font-size:12px;color:#222;font-weight:normal;">07/06/2021</div><div class="t" style="left:988px;top:426.8px;line-height:16px;font-size:12px;color:#222;font-weight:normal;">Spring Valley</div><div class="t" style="left:1101px;top:426.8px;line-height:16px;font-size:11.6px;color:#1666a6;font-weight:normal;">SHO-0045157</div><div class="t" style="left:1216px;top:426.8px;line-height:16px;font-size:12px;color:#222;font-weight:normal;">Display test</div><svg class="a" style="left:728px;top:449.8px;" width="18" height="18" viewBox="0 0 18 18"><rect x="1" y="1" width="16" height="16" rx="2" fill="none" stroke="#0b5a96" stroke-width="2"/></svg><div class="t" style="left:759px;top:452.3px;line-height:15px;font-size:11.3px;color:#222;font-weight:normal;">PC-0000370</div><div class="t" style="left:873px;top:451.8px;line-height:16px;font-size:12px;color:#222;font-weight:normal;">07/06/2021</div><div class="t" style="left:988px;top:451.8px;line-height:16px;font-size:12px;color:#222;font-weight:normal;">Spring Valley</div><div class="t" style="left:1101px;top:451.8px;line-height:16px;font-size:11.6px;color:#1666a6;font-weight:normal;">SHO-0045144</div><div class="t" style="left:1216px;top:451.8px;line-height:16px;font-size:12px;color:#222;font-weight:normal;">111111</div><svg class="a" style="left:728px;top:474.8px;" width="18" height="18" viewBox="0 0 18 18"><rect x="1" y="1" width="16" height="16" rx="2" fill="none" stroke="#0b5a96" stroke-width="2"/></svg><div class="t" style="left:759px;top:477.3px;line-height:15px;font-size:11.3px;color:#222;font-weight:normal;">PC-0000369</div><div class="t" style="left:873px;top:476.8px;line-height:16px;font-size:12px;color:#222;font-weight:normal;">07/06/2021</div><div class="t" style="left:988px;top:476.8px;line-height:16px;font-size:12px;color:#222;font-weight:normal;">Spring Valley</div><div class="t" style="left:1101px;top:476.8px;line-height:16px;font-size:11.6px;color:#1666a6;font-weight:normal;">SHO-0045089</div><div class="t" style="left:1216px;top:476.8px;line-height:16px;font-size:12px;color:#222;font-weight:normal;">Display cat</div><div class="t" style="left:1559px;top:476.8px;line-height:16px;font-size:12px;color:#222;font-weight:normal;">Brooklyn</div><div class="a" style="left:510px;top:351px;width:213px;height:54px;border:4px solid #f85547;filter:drop-shadow(2px 2px 1.5px rgba(0,0,0,0.85))"></div><div class="a" style="left:859px;top:386px;width:119px;height:129px;border:4px solid #f85547;filter:drop-shadow(2px 2px 1.5px rgba(0,0,0,0.85))"></div>
</body></html>
